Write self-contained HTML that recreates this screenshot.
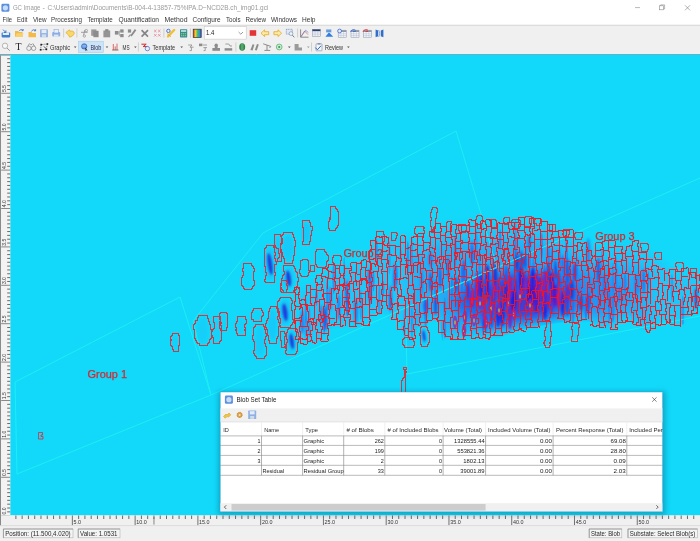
<!DOCTYPE html>
<html><head><meta charset="utf-8"><title>GC Image</title>
<style>
html,body{margin:0;padding:0;background:#f0f0f0;}
body{width:700px;height:541px;overflow:hidden;position:relative;font-family:"Liberation Sans",sans-serif;}
svg text{font-family:"Liberation Sans",sans-serif;}
#top{position:absolute;left:0;top:0;width:700px;height:55px;will-change:transform;}
#main{position:absolute;left:0;top:0;width:700px;height:541px;will-change:transform;}
</style></head><body>
<div id="main"><svg width="700" height="541" viewBox="0 0 700 541" style="position:absolute;left:0;top:0"><defs><filter id="b7" x="-20%" y="-50%" width="140%" height="200%"><feGaussianBlur stdDeviation="7"/></filter><filter id="b5" x="-20%" y="-50%" width="140%" height="200%"><feGaussianBlur stdDeviation="4.5"/></filter><filter id="b1" x="-5%" y="-20%" width="110%" height="140%"><feGaussianBlur stdDeviation="1.1"/></filter><filter id="b06" x="-5%" y="-20%" width="110%" height="140%"><feGaussianBlur stdDeviation="0.45"/></filter><clipPath id="pc"><rect x="10.2" y="55" width="690" height="460.6"/></clipPath></defs><rect x="10.20" y="55.00" width="690.00" height="460.60" fill="#12d9fa"/><defs><clipPath id="env"><polygon points="292,288.0 295,286.6 298,284.4 301,282.8 304,282.0 307,281.2 310,279.6 313,277.5 316,275.4 319,273.0 322,270.0 325,267.0 328,264.0 331,263.5 334,263.0 337,262.5 340,262.0 343,258.4 346,256.0 349,256.0 352,256.0 355,256.0 358,256.0 361,256.0 364,256.0 367,256.0 370,244.0 373,236.0 376,233.0 379,231.0 382,231.2 385,231.3 388,231.5 391,231.6 394,231.7 397,231.9 400,232.0 403,231.7 406,231.4 409,231.1 412,230.8 415,230.5 418,230.2 421,229.9 424,229.6 427,229.3 430,229.0 433,220.0 436,219.8 439,219.5 442,219.3 445,219.0 448,218.8 451,218.5 454,218.3 457,218.1 460,217.8 463,217.6 466,217.3 469,217.1 472,217.0 475,216.9 478,216.8 481,216.8 484,216.7 487,216.7 490,216.6 493,216.5 496,216.5 499,216.4 502,216.4 505,216.3 508,216.2 511,216.2 514,216.1 517,216.1 520,216.0 523,216.2 526,216.5 529,216.7 532,217.0 535,217.2 538,217.4 541,217.7 544,217.9 547,218.9 550,220.3 553,221.7 556,223.1 559,224.5 562,225.7 565,226.8 568,227.8 571,228.8 574,229.9 577,230.9 580,232.0 583,233.5 586,235.0 589,236.5 592,238.0 595,239.0 598,239.0 601,239.0 604,239.0 607,239.0 610,239.0 613,239.0 616,239.0 619,239.0 622,239.0 625,239.0 628,239.0 631,239.0 634,239.0 637,240.4 640,241.7 643,243.1 646,244.6 649,246.4 652,248.2 655,250.0 658,251.8 661,253.9 664,256.7 667,259.4 670,262.2 673,264.2 676,264.7 679,265.2 682,265.8 685,266.3 688,266.9 691,267.4 694,267.9 697,268.5 700,269.0 703,269.0 706,269.0 706,306.5 703,306.5 700,306.5 697,309.5 694,312.5 691,315.9 688,320.2 685,324.5 682,324.4 679,324.3 676,324.1 673,324.0 670,323.9 667,323.8 664,323.7 661,323.5 658,324.9 655,327.0 652,329.1 649,330.5 646,330.5 643,330.5 640,330.5 637,327.1 634,323.8 631,321.5 628,321.5 625,321.5 622,321.5 619,322.6 616,326.0 613,329.4 610,330.5 607,330.5 604,329.9 601,328.1 598,326.3 595,324.5 592,322.7 589,321.5 586,321.6 583,321.7 580,321.8 577,321.9 574,322.0 571,322.1 568,322.2 565,322.3 562,322.4 559,322.7 556,323.2 553,323.7 550,324.3 547,324.8 544,325.3 541,325.9 538,326.4 535,326.9 532,327.5 529,328.0 526,328.5 523,329.1 520,329.6 517,330.1 514,331.0 511,332.6 508,334.2 505,335.8 502,337.4 499,338.5 496,338.6 493,338.7 490,338.8 487,338.9 484,339.1 481,339.2 478,339.3 475,339.4 472,339.5 469,339.6 466,339.7 463,339.8 460,339.9 457,340.0 454,340.1 451,340.2 448,340.3 445,340.4 442,340.5 439,321.5 436,321.5 433,321.5 430,321.5 427,326.6 424,326.9 421,327.1 418,327.4 415,338.5 412,338.5 409,338.5 406,338.5 403,338.5 400,319.5 397,319.5 394,319.5 391,319.5 388,319.5 385,314.5 382,314.5 379,314.5 376,314.5 373,314.5 370,326.5 367,326.6 364,326.7 361,326.9 358,327.0 355,327.1 352,327.2 349,327.3 346,327.5 343,327.7 340,328.1 337,328.4 334,328.7 331,329.1 328,329.4 325,342.5 322,342.6 319,342.7 316,342.9 313,343.0 310,343.1 307,343.2 304,343.3 301,343.5 298,343.2 295,342.8 292,342.5"/></clipPath></defs><g clip-path="url(#pc)"><g clip-path="url(#env)"><polygon points="300,291 306,290 312,286 318,282 324,276 330,272 336,271 342,268 348,264 354,264 360,264 366,264 372,245 378,239 384,239 390,240 396,240 402,240 408,239 414,239 420,238 426,237 432,231 438,228 444,227 450,227 456,226 462,226 468,225 474,225 480,225 486,225 492,225 498,224 504,224 510,224 516,224 522,224 528,225 534,225 540,226 546,226 552,229 558,232 564,234 570,236 576,239 582,241 588,244 594,247 600,247 606,247 612,247 618,247 624,247 630,247 636,248 642,251 648,254 654,257 660,261 666,266 672,272 678,273 684,274 690,275 696,276 702,277 702,303 696,307 690,314 684,321 678,321 672,320 666,320 660,320 654,324 648,327 642,327 636,322 630,318 624,318 618,320 612,327 606,327 600,324 594,320 588,318 582,318 576,318 570,319 564,319 558,319 552,320 546,321 540,323 534,324 528,325 522,326 516,327 510,330 504,333 498,335 492,335 486,335 480,336 474,336 468,336 462,336 456,337 450,337 444,337 438,318 432,318 426,323 420,324 414,335 408,335 402,335 396,316 390,316 384,311 378,311 372,311 366,323 360,323 354,324 348,324 342,324 336,325 330,326 324,339 318,339 312,340 306,340 300,340" fill="#30b2f4" opacity="0.5" filter="url(#b5)"/><polygon points="410,255 416,254 422,254 428,253 434,244 440,243 446,243 452,242 458,242 464,241 470,241 476,241 482,241 488,241 494,241 500,240 506,240 512,240 518,240 524,240 530,241 536,241 542,242 548,243 554,246 560,249 566,251 572,253 578,255 584,258 590,261 596,263 602,263 608,263 614,263 620,263 626,263 632,263 638,265 644,268 650,271 650,323 644,323 638,321 632,314 626,314 620,314 614,321 608,323 602,321 596,318 590,314 584,314 578,314 572,315 566,315 560,315 554,316 548,317 542,318 536,319 530,320 524,321 518,322 512,325 506,328 500,331 494,331 488,331 482,332 476,332 470,332 464,332 458,332 452,333 446,333 440,314 434,314 428,319 422,320 416,326 410,331" fill="#2a90f0" opacity="0.4" filter="url(#b5)"/><ellipse cx="516" cy="298" rx="64" ry="25" fill="#2840e0" opacity="0.7" filter="url(#b7)" transform="rotate(-5 516 298)"/><ellipse cx="578" cy="294" rx="52" ry="22" fill="#2a70ec" opacity="0.45" filter="url(#b7)"/><ellipse cx="524" cy="296" rx="36" ry="20" fill="#5c26c4" opacity="0.65" filter="url(#b5)"/><g filter="url(#b06)"><ellipse cx="305.9" cy="311.6" rx="1.2" ry="12.4" fill="#2870ea" opacity="0.53"/><ellipse cx="309.6" cy="322.4" rx="1.0" ry="15.2" fill="#2870ea" opacity="0.39"/><ellipse cx="316.4" cy="297.9" rx="1.4" ry="8.0" fill="#2870ea" opacity="0.49"/><ellipse cx="324.2" cy="320.3" rx="1.5" ry="12.5" fill="#2870ea" opacity="0.44"/><ellipse cx="324.2" cy="321.9" rx="1.0" ry="13.3" fill="#2870ea" opacity="0.32"/><ellipse cx="327.1" cy="294.9" rx="1.0" ry="16.2" fill="#2870ea" opacity="0.54"/><ellipse cx="333.7" cy="277.3" rx="1.3" ry="16.9" fill="#2870ea" opacity="0.56"/><ellipse cx="344.2" cy="270.8" rx="0.9" ry="16.3" fill="#2870ea" opacity="0.39"/><ellipse cx="347.4" cy="308.1" rx="1.4" ry="8.1" fill="#2870ea" opacity="0.56"/><ellipse cx="347.4" cy="303.1" rx="1.4" ry="13.6" fill="#2870ea" opacity="0.53"/><ellipse cx="360.9" cy="304.8" rx="1.3" ry="15.2" fill="#2870ea" opacity="0.38"/><ellipse cx="369.8" cy="292.7" rx="1.3" ry="14.9" fill="#2870ea" opacity="0.52"/><ellipse cx="373.4" cy="281.0" rx="1.1" ry="10.5" fill="#2870ea" opacity="0.53"/><ellipse cx="376.7" cy="250.2" rx="0.9" ry="12.5" fill="#2870ea" opacity="0.59"/><ellipse cx="379.3" cy="302.9" rx="1.2" ry="17.4" fill="#2870ea" opacity="0.41"/><ellipse cx="383.2" cy="288.9" rx="1.2" ry="8.2" fill="#2870ea" opacity="0.51"/><ellipse cx="389.4" cy="258.0" rx="1.3" ry="16.4" fill="#2870ea" opacity="0.35"/><ellipse cx="396.7" cy="274.8" rx="1.1" ry="9.6" fill="#2870ea" opacity="0.37"/><ellipse cx="400.6" cy="257.1" rx="1.1" ry="10.1" fill="#2870ea" opacity="0.37"/><ellipse cx="404.7" cy="320.0" rx="1.1" ry="12.3" fill="#2870ea" opacity="0.37"/><ellipse cx="404.7" cy="328.0" rx="1.3" ry="8.7" fill="#2870ea" opacity="0.48"/><ellipse cx="407.8" cy="257.9" rx="1.1" ry="16.9" fill="#2870ea" opacity="0.57"/><ellipse cx="411.9" cy="324.0" rx="0.9" ry="16.3" fill="#2870ea" opacity="0.44"/><ellipse cx="411.9" cy="255.3" rx="1.1" ry="17.6" fill="#2870ea" opacity="0.36"/><ellipse cx="425.6" cy="314.7" rx="0.9" ry="11.4" fill="#2870ea" opacity="0.40"/><ellipse cx="425.6" cy="319.9" rx="1.5" ry="10.2" fill="#2870ea" opacity="0.30"/><ellipse cx="432.1" cy="292.4" rx="1.0" ry="11.1" fill="#2870ea" opacity="0.39"/><ellipse cx="435.3" cy="291.6" rx="1.1" ry="12.9" fill="#2870ea" opacity="0.59"/><ellipse cx="442.1" cy="331.1" rx="1.0" ry="10.8" fill="#2870ea" opacity="0.33"/><ellipse cx="444.8" cy="327.8" rx="1.4" ry="10.5" fill="#2870ea" opacity="0.57"/><ellipse cx="444.8" cy="308.7" rx="1.4" ry="11.3" fill="#2870ea" opacity="0.41"/><ellipse cx="451.8" cy="289.3" rx="1.0" ry="14.1" fill="#2870ea" opacity="0.60"/><ellipse cx="455.2" cy="251.3" rx="1.3" ry="16.2" fill="#2870ea" opacity="0.55"/><ellipse cx="458.9" cy="320.8" rx="1.1" ry="11.6" fill="#2870ea" opacity="0.30"/><ellipse cx="461.9" cy="279.0" rx="1.1" ry="13.7" fill="#2870ea" opacity="0.53"/><ellipse cx="465.3" cy="322.8" rx="1.3" ry="10.7" fill="#2870ea" opacity="0.33"/><ellipse cx="472.1" cy="298.5" rx="1.2" ry="14.0" fill="#2870ea" opacity="0.47"/><ellipse cx="476.2" cy="244.6" rx="1.4" ry="15.7" fill="#2870ea" opacity="0.39"/><ellipse cx="479.5" cy="315.5" rx="1.2" ry="8.4" fill="#2870ea" opacity="0.56"/><ellipse cx="479.5" cy="263.6" rx="1.1" ry="16.2" fill="#2870ea" opacity="0.47"/><ellipse cx="483.2" cy="320.5" rx="1.3" ry="16.8" fill="#2870ea" opacity="0.49"/><ellipse cx="486.6" cy="323.8" rx="1.4" ry="9.3" fill="#2870ea" opacity="0.39"/><ellipse cx="486.6" cy="292.9" rx="1.4" ry="13.0" fill="#2870ea" opacity="0.52"/><ellipse cx="489.4" cy="319.4" rx="1.2" ry="13.0" fill="#2870ea" opacity="0.35"/><ellipse cx="492.8" cy="259.6" rx="0.9" ry="9.6" fill="#2870ea" opacity="0.44"/><ellipse cx="496.8" cy="297.1" rx="1.4" ry="17.0" fill="#2870ea" opacity="0.39"/><ellipse cx="500.2" cy="239.6" rx="1.1" ry="10.4" fill="#2870ea" opacity="0.58"/><ellipse cx="502.9" cy="308.9" rx="1.4" ry="11.8" fill="#2870ea" opacity="0.34"/><ellipse cx="505.6" cy="303.7" rx="1.3" ry="13.6" fill="#2870ea" opacity="0.49"/><ellipse cx="508.7" cy="294.0" rx="1.4" ry="16.0" fill="#2870ea" opacity="0.41"/><ellipse cx="512.8" cy="291.7" rx="1.3" ry="14.7" fill="#2870ea" opacity="0.41"/><ellipse cx="515.5" cy="248.0" rx="1.4" ry="12.8" fill="#2870ea" opacity="0.34"/><ellipse cx="515.5" cy="237.6" rx="1.2" ry="18.0" fill="#2870ea" opacity="0.36"/><ellipse cx="518.4" cy="271.2" rx="1.4" ry="15.9" fill="#2870ea" opacity="0.60"/><ellipse cx="518.4" cy="284.8" rx="1.0" ry="11.6" fill="#2870ea" opacity="0.40"/><ellipse cx="526.1" cy="263.2" rx="1.2" ry="16.6" fill="#2870ea" opacity="0.33"/><ellipse cx="526.1" cy="291.5" rx="1.4" ry="8.9" fill="#2870ea" opacity="0.45"/><ellipse cx="529.7" cy="298.6" rx="1.3" ry="14.1" fill="#2870ea" opacity="0.33"/><ellipse cx="529.7" cy="259.4" rx="1.0" ry="12.5" fill="#2870ea" opacity="0.50"/><ellipse cx="533.5" cy="267.8" rx="1.2" ry="11.9" fill="#2870ea" opacity="0.47"/><ellipse cx="541.7" cy="245.9" rx="1.4" ry="12.8" fill="#2870ea" opacity="0.53"/><ellipse cx="544.5" cy="280.0" rx="1.2" ry="14.9" fill="#2870ea" opacity="0.59"/><ellipse cx="544.5" cy="289.0" rx="1.0" ry="13.0" fill="#2870ea" opacity="0.56"/><ellipse cx="548.3" cy="280.7" rx="1.2" ry="15.4" fill="#2870ea" opacity="0.44"/><ellipse cx="552.0" cy="256.6" rx="1.0" ry="8.3" fill="#2870ea" opacity="0.56"/><ellipse cx="552.0" cy="295.6" rx="1.0" ry="15.5" fill="#2870ea" opacity="0.44"/><ellipse cx="555.9" cy="279.8" rx="1.0" ry="14.3" fill="#2870ea" opacity="0.49"/><ellipse cx="555.9" cy="278.0" rx="1.3" ry="11.5" fill="#2870ea" opacity="0.40"/><ellipse cx="559.5" cy="261.8" rx="1.2" ry="15.5" fill="#2870ea" opacity="0.58"/><ellipse cx="559.5" cy="295.7" rx="1.4" ry="15.4" fill="#2870ea" opacity="0.42"/><ellipse cx="563.6" cy="283.3" rx="1.5" ry="15.3" fill="#2870ea" opacity="0.54"/><ellipse cx="566.5" cy="255.4" rx="1.5" ry="17.6" fill="#2870ea" opacity="0.53"/><ellipse cx="569.8" cy="271.3" rx="1.3" ry="9.0" fill="#2870ea" opacity="0.53"/><ellipse cx="572.9" cy="312.0" rx="1.4" ry="17.2" fill="#2870ea" opacity="0.51"/><ellipse cx="572.9" cy="295.5" rx="1.2" ry="16.4" fill="#2870ea" opacity="0.41"/><ellipse cx="576.9" cy="266.6" rx="1.2" ry="9.8" fill="#2870ea" opacity="0.38"/><ellipse cx="585.9" cy="308.1" rx="1.4" ry="11.9" fill="#2870ea" opacity="0.60"/><ellipse cx="589.3" cy="283.2" rx="1.1" ry="11.5" fill="#2870ea" opacity="0.31"/><ellipse cx="598.8" cy="297.8" rx="1.5" ry="16.9" fill="#2870ea" opacity="0.33"/><ellipse cx="602.2" cy="260.1" rx="1.4" ry="11.8" fill="#2870ea" opacity="0.32"/><ellipse cx="609.2" cy="307.4" rx="1.0" ry="15.1" fill="#2870ea" opacity="0.53"/><ellipse cx="609.2" cy="298.0" rx="1.2" ry="10.6" fill="#2870ea" opacity="0.33"/><ellipse cx="613.0" cy="278.9" rx="1.2" ry="16.1" fill="#2870ea" opacity="0.33"/><ellipse cx="613.0" cy="308.8" rx="1.5" ry="13.6" fill="#2870ea" opacity="0.50"/><ellipse cx="616.1" cy="274.6" rx="1.3" ry="17.8" fill="#2870ea" opacity="0.39"/><ellipse cx="619.4" cy="294.2" rx="1.0" ry="8.5" fill="#2870ea" opacity="0.52"/><ellipse cx="625.1" cy="283.3" rx="1.5" ry="9.7" fill="#2870ea" opacity="0.49"/><ellipse cx="638.8" cy="283.2" rx="1.4" ry="10.5" fill="#2870ea" opacity="0.31"/><ellipse cx="648.3" cy="280.5" rx="1.1" ry="9.3" fill="#2870ea" opacity="0.56"/><ellipse cx="671.9" cy="287.4" rx="1.4" ry="13.2" fill="#2870ea" opacity="0.35"/><ellipse cx="682.8" cy="311.7" rx="1.4" ry="16.1" fill="#2870ea" opacity="0.47"/></g><g filter="url(#b1)"><ellipse cx="302.3" cy="322.0" rx="1.9" ry="11.9" fill="#2a60ea" opacity="0.69"/><ellipse cx="306.4" cy="328.3" rx="1.3" ry="10.7" fill="#2a60ea" opacity="0.51"/><ellipse cx="321.2" cy="314.5" rx="1.4" ry="9.4" fill="#2448e0" opacity="0.59"/><ellipse cx="325.6" cy="318.1" rx="1.7" ry="12.6" fill="#2448e0" opacity="0.85"/><ellipse cx="330.0" cy="298.9" rx="1.7" ry="12.3" fill="#2a60ea" opacity="0.63"/><ellipse cx="338.8" cy="307.3" rx="1.3" ry="12.6" fill="#2a60ea" opacity="0.80"/><ellipse cx="346.8" cy="292.6" rx="1.7" ry="12.7" fill="#2448e0" opacity="0.71"/><ellipse cx="355.9" cy="311.1" rx="2.0" ry="12.5" fill="#2448e0" opacity="0.54"/><ellipse cx="369.7" cy="293.7" rx="1.5" ry="8.5" fill="#2a60ea" opacity="0.73"/><ellipse cx="369.7" cy="277.3" rx="2.1" ry="8.9" fill="#2a60ea" opacity="0.82"/><ellipse cx="390.4" cy="302.0" rx="1.4" ry="9.3" fill="#2448e0" opacity="0.83"/><ellipse cx="390.4" cy="293.8" rx="1.7" ry="9.0" fill="#2a60ea" opacity="0.53"/><ellipse cx="395.0" cy="271.4" rx="1.4" ry="7.8" fill="#2a60ea" opacity="0.86"/><ellipse cx="395.0" cy="280.1" rx="2.0" ry="9.6" fill="#2a60ea" opacity="0.78"/><ellipse cx="421.7" cy="281.8" rx="1.5" ry="12.5" fill="#2a60ea" opacity="0.53"/><ellipse cx="425.6" cy="305.7" rx="2.1" ry="7.3" fill="#2448e0" opacity="0.87"/><ellipse cx="425.6" cy="307.7" rx="1.4" ry="10.0" fill="#2a60ea" opacity="0.57"/><ellipse cx="430.5" cy="281.7" rx="1.8" ry="10.1" fill="#2448e0" opacity="0.71"/><ellipse cx="430.5" cy="259.3" rx="2.1" ry="7.7" fill="#2a60ea" opacity="0.59"/><ellipse cx="435.6" cy="306.1" rx="1.8" ry="8.9" fill="#2030d0" opacity="0.68"/><ellipse cx="440.1" cy="277.7" rx="1.4" ry="11.5" fill="#2448e0" opacity="0.74"/><ellipse cx="448.0" cy="267.3" rx="1.5" ry="11.0" fill="#2a60ea" opacity="0.72"/><ellipse cx="456.1" cy="284.5" rx="1.8" ry="7.4" fill="#2038dc" opacity="0.67"/><ellipse cx="464.0" cy="271.6" rx="1.9" ry="12.1" fill="#2a48e4" opacity="0.76"/><ellipse cx="468.1" cy="290.8" rx="1.6" ry="8.8" fill="#2a48e4" opacity="0.95"/><ellipse cx="468.1" cy="291.1" rx="1.4" ry="11.1" fill="#2038dc" opacity="0.71"/><ellipse cx="472.1" cy="252.4" rx="1.7" ry="11.6" fill="#2a60ea" opacity="0.72"/><ellipse cx="472.1" cy="298.2" rx="2.1" ry="9.4" fill="#8a1cb0" opacity="0.89"/><ellipse cx="472.1" cy="255.8" rx="1.7" ry="9.9" fill="#2a60ea" opacity="0.58"/><ellipse cx="477.2" cy="289.8" rx="2.2" ry="10.9" fill="#7020bc" opacity="0.83"/><ellipse cx="477.2" cy="284.1" rx="2.0" ry="11.6" fill="#4a18cc" opacity="0.85"/><ellipse cx="477.2" cy="284.3" rx="1.7" ry="10.1" fill="#a0209c" opacity="0.81"/><ellipse cx="481.1" cy="285.6" rx="1.7" ry="13.9" fill="#2418d8" opacity="0.88"/><ellipse cx="484.2" cy="319.6" rx="1.8" ry="11.1" fill="#2038dc" opacity="0.81"/><ellipse cx="484.2" cy="309.6" rx="1.7" ry="11.0" fill="#a0209c" opacity="0.95"/><ellipse cx="487.3" cy="290.5" rx="2.2" ry="9.0" fill="#4a18cc" opacity="0.88"/><ellipse cx="487.3" cy="273.0" rx="2.1" ry="8.6" fill="#2030d0" opacity="0.85"/><ellipse cx="487.3" cy="279.6" rx="1.9" ry="12.6" fill="#4a18cc" opacity="0.95"/><ellipse cx="491.6" cy="309.2" rx="1.6" ry="11.3" fill="#8a1cb0" opacity="0.94"/><ellipse cx="491.6" cy="319.1" rx="2.0" ry="9.8" fill="#2a48e4" opacity="0.70"/><ellipse cx="495.2" cy="287.8" rx="2.1" ry="10.6" fill="#8a1cb0" opacity="0.98"/><ellipse cx="495.2" cy="274.0" rx="2.0" ry="10.6" fill="#2030d0" opacity="0.90"/><ellipse cx="498.0" cy="316.7" rx="1.6" ry="10.9" fill="#2020dc" opacity="0.99"/><ellipse cx="502.2" cy="314.6" rx="2.2" ry="12.3" fill="#2020dc" opacity="0.83"/><ellipse cx="506.3" cy="295.3" rx="1.8" ry="11.0" fill="#2418d8" opacity="0.81"/><ellipse cx="506.3" cy="274.9" rx="1.9" ry="10.1" fill="#2a48e4" opacity="0.65"/><ellipse cx="510.0" cy="318.2" rx="2.1" ry="11.7" fill="#8a1cb0" opacity="0.83"/><ellipse cx="510.0" cy="286.5" rx="2.1" ry="11.1" fill="#a0209c" opacity="0.89"/><ellipse cx="513.4" cy="300.5" rx="2.2" ry="10.9" fill="#2418d8" opacity="0.98"/><ellipse cx="516.6" cy="263.1" rx="1.4" ry="12.4" fill="#2030d0" opacity="0.63"/><ellipse cx="516.6" cy="262.7" rx="1.8" ry="7.4" fill="#2030d0" opacity="0.80"/><ellipse cx="521.1" cy="278.0" rx="2.4" ry="11.7" fill="#2418d8" opacity="0.85"/><ellipse cx="521.1" cy="262.1" rx="1.7" ry="11.5" fill="#2030d0" opacity="0.76"/><ellipse cx="524.9" cy="284.7" rx="1.8" ry="10.7" fill="#8a1cb0" opacity="0.85"/><ellipse cx="524.9" cy="260.8" rx="1.9" ry="7.6" fill="#2038dc" opacity="0.70"/><ellipse cx="529.2" cy="289.0" rx="2.4" ry="9.5" fill="#7020bc" opacity="0.94"/><ellipse cx="529.2" cy="295.7" rx="2.0" ry="9.3" fill="#2418d8" opacity="0.99"/><ellipse cx="529.2" cy="242.5" rx="1.7" ry="7.2" fill="#2448e0" opacity="0.58"/><ellipse cx="532.8" cy="281.8" rx="2.1" ry="14.4" fill="#2020dc" opacity="0.99"/><ellipse cx="532.8" cy="295.0" rx="2.3" ry="9.9" fill="#4a18cc" opacity="0.82"/><ellipse cx="536.4" cy="297.8" rx="2.3" ry="14.7" fill="#4a18cc" opacity="0.92"/><ellipse cx="536.4" cy="284.8" rx="1.7" ry="11.7" fill="#7020bc" opacity="0.96"/><ellipse cx="540.2" cy="289.2" rx="1.8" ry="10.9" fill="#2020dc" opacity="0.98"/><ellipse cx="540.2" cy="290.0" rx="1.9" ry="9.9" fill="#a0209c" opacity="0.82"/><ellipse cx="545.0" cy="305.8" rx="2.0" ry="14.9" fill="#2020dc" opacity="0.89"/><ellipse cx="545.0" cy="296.6" rx="2.1" ry="10.8" fill="#7020bc" opacity="0.90"/><ellipse cx="545.0" cy="281.3" rx="2.2" ry="10.7" fill="#8a1cb0" opacity="0.96"/><ellipse cx="548.6" cy="256.3" rx="1.4" ry="9.1" fill="#2a60ea" opacity="0.60"/><ellipse cx="548.6" cy="273.7" rx="2.0" ry="12.2" fill="#2038dc" opacity="0.78"/><ellipse cx="551.9" cy="281.1" rx="1.8" ry="9.8" fill="#a0209c" opacity="0.85"/><ellipse cx="551.9" cy="286.8" rx="1.8" ry="14.4" fill="#2418d8" opacity="0.89"/><ellipse cx="551.9" cy="297.0" rx="1.6" ry="14.9" fill="#7020bc" opacity="0.83"/><ellipse cx="555.4" cy="269.5" rx="1.8" ry="9.8" fill="#2038dc" opacity="0.64"/><ellipse cx="555.4" cy="295.3" rx="2.0" ry="11.3" fill="#4a18cc" opacity="0.97"/><ellipse cx="558.5" cy="281.5" rx="1.6" ry="9.5" fill="#2a48e4" opacity="0.87"/><ellipse cx="558.5" cy="297.9" rx="2.2" ry="10.9" fill="#a0209c" opacity="0.98"/><ellipse cx="562.7" cy="264.1" rx="1.5" ry="9.2" fill="#2a60ea" opacity="0.83"/><ellipse cx="562.7" cy="303.6" rx="1.8" ry="12.9" fill="#2020dc" opacity="0.97"/><ellipse cx="567.4" cy="308.7" rx="1.7" ry="7.9" fill="#2038dc" opacity="0.70"/><ellipse cx="567.4" cy="271.5" rx="1.7" ry="12.9" fill="#2038dc" opacity="0.63"/><ellipse cx="567.4" cy="294.3" rx="2.1" ry="10.9" fill="#7020bc" opacity="0.85"/><ellipse cx="571.7" cy="290.2" rx="2.0" ry="9.8" fill="#2030d0" opacity="0.81"/><ellipse cx="574.6" cy="271.9" rx="1.8" ry="9.4" fill="#2a48e4" opacity="0.91"/><ellipse cx="581.1" cy="303.3" rx="2.0" ry="7.8" fill="#2030d0" opacity="0.64"/><ellipse cx="588.3" cy="303.1" rx="1.6" ry="10.3" fill="#2a48e4" opacity="0.92"/><ellipse cx="588.3" cy="250.7" rx="2.0" ry="12.4" fill="#2a60ea" opacity="0.60"/><ellipse cx="598.4" cy="269.8" rx="1.8" ry="12.3" fill="#2448e0" opacity="0.79"/><ellipse cx="604.4" cy="284.7" rx="2.1" ry="11.2" fill="#2a60ea" opacity="0.51"/><ellipse cx="636.0" cy="285.0" rx="1.5" ry="11.6" fill="#2a60ea" opacity="0.65"/><ellipse cx="643.7" cy="280.9" rx="1.4" ry="12.3" fill="#2448e0" opacity="0.64"/><ellipse cx="696.0" cy="298.5" rx="1.7" ry="10.9" fill="#2448e0" opacity="0.79"/></g><g filter="url(#b06)"><ellipse cx="472" cy="301" rx="2.2" ry="6.5" fill="#9820b0" opacity="0.75"/><ellipse cx="472" cy="301.5" rx="1.0" ry="2.3" fill="#a8cc44" opacity="0.7"/><ellipse cx="480" cy="303" rx="2.2" ry="6.5" fill="#9820b0" opacity="0.75"/><ellipse cx="480" cy="303.5" rx="1.0" ry="2.3" fill="#a8cc44" opacity="0.7"/><ellipse cx="465" cy="317" rx="2.2" ry="6.5" fill="#9820b0" opacity="0.75"/><ellipse cx="465" cy="317.5" rx="1.0" ry="2.3" fill="#a8cc44" opacity="0.7"/><ellipse cx="474" cy="320" rx="2.2" ry="6.5" fill="#9820b0" opacity="0.75"/><ellipse cx="474" cy="320.5" rx="1.0" ry="2.3" fill="#a8cc44" opacity="0.7"/><ellipse cx="491" cy="308" rx="2.2" ry="6.5" fill="#9820b0" opacity="0.75"/><ellipse cx="491" cy="308.5" rx="1.0" ry="2.3" fill="#a8cc44" opacity="0.7"/><ellipse cx="499" cy="310" rx="2.2" ry="6.5" fill="#9820b0" opacity="0.75"/><ellipse cx="499" cy="310.5" rx="1.0" ry="2.3" fill="#a8cc44" opacity="0.7"/><ellipse cx="464" cy="331" rx="2.2" ry="6.5" fill="#9820b0" opacity="0.75"/><ellipse cx="464" cy="331.5" rx="1.0" ry="2.3" fill="#a8cc44" opacity="0.7"/><ellipse cx="520" cy="296" rx="2.2" ry="6.5" fill="#9820b0" opacity="0.75"/><ellipse cx="520" cy="296.5" rx="1.0" ry="2.3" fill="#a8cc44" opacity="0.7"/><ellipse cx="508" cy="303" rx="2.2" ry="6.5" fill="#9820b0" opacity="0.75"/><ellipse cx="508" cy="303.5" rx="1.0" ry="2.3" fill="#a8cc44" opacity="0.7"/><ellipse cx="486" cy="322" rx="2.2" ry="6.5" fill="#9820b0" opacity="0.75"/><ellipse cx="486" cy="322.5" rx="1.0" ry="2.3" fill="#a8cc44" opacity="0.7"/><ellipse cx="455" cy="322" rx="2.2" ry="6.5" fill="#9820b0" opacity="0.75"/><ellipse cx="455" cy="322.5" rx="1.0" ry="2.3" fill="#a8cc44" opacity="0.7"/><ellipse cx="530" cy="305" rx="2.2" ry="6.5" fill="#9820b0" opacity="0.75"/><ellipse cx="530" cy="305.5" rx="1.0" ry="2.3" fill="#a8cc44" opacity="0.7"/><ellipse cx="514" cy="314" rx="2.2" ry="6.5" fill="#9820b0" opacity="0.75"/><ellipse cx="514" cy="314.5" rx="1.0" ry="2.3" fill="#a8cc44" opacity="0.7"/></g></g><g filter="url(#b1)"><ellipse cx="306.1" cy="232.4" rx="4.3" ry="10.0" fill="#2a96f2" opacity="0.24"/><ellipse cx="277.9" cy="247.8" rx="3.4" ry="11.1" fill="#2a96f2" opacity="0.17"/><ellipse cx="288.0" cy="247.8" rx="5.5" ry="12.7" fill="#2a96f2" opacity="0.21"/><ellipse cx="270.0" cy="264.1" rx="5.9" ry="15.5" fill="#2a96f2" opacity="0.28"/><ellipse cx="270.0" cy="264.1" rx="2.4" ry="11.1" fill="#1c30d8" opacity="0.9" transform="rotate(-8 270.0 264.1)"/><ellipse cx="247.1" cy="276.6" rx="4.7" ry="10.9" fill="#2a96f2" opacity="0.07"/><ellipse cx="321.0" cy="258.6" rx="5.0" ry="7.6" fill="#2a96f2" opacity="0.10"/><ellipse cx="304.9" cy="268.0" rx="3.2" ry="7.3" fill="#2a96f2" opacity="0.07"/><ellipse cx="288.6" cy="278.5" rx="6.0" ry="11.3" fill="#2a96f2" opacity="0.28"/><ellipse cx="288.6" cy="278.5" rx="2.4" ry="8.1" fill="#1c30d8" opacity="0.9" transform="rotate(-8 288.6 278.5)"/><ellipse cx="202.7" cy="330.5" rx="5.3" ry="12.5" fill="#2a96f2" opacity="0.14"/><ellipse cx="217.0" cy="329.6" rx="3.9" ry="11.4" fill="#2a96f2" opacity="0.10"/><ellipse cx="223.5" cy="321.0" rx="3.8" ry="7.6" fill="#2a96f2" opacity="0.07"/><ellipse cx="241.2" cy="326.0" rx="4.6" ry="7.6" fill="#2a96f2" opacity="0.10"/><ellipse cx="257.0" cy="315.1" rx="4.8" ry="5.2" fill="#2a96f2" opacity="0.07"/><ellipse cx="259.8" cy="341.4" rx="5.2" ry="13.9" fill="#2a96f2" opacity="0.17"/><ellipse cx="272.6" cy="324.8" rx="4.2" ry="15.3" fill="#2a96f2" opacity="0.24"/><ellipse cx="285.0" cy="312.2" rx="6.2" ry="12.4" fill="#2a96f2" opacity="0.32"/><ellipse cx="285.0" cy="312.2" rx="2.5" ry="8.9" fill="#1c30d8" opacity="0.9" transform="rotate(-8 285.0 312.2)"/><ellipse cx="282.8" cy="339.7" rx="2.4" ry="6.7" fill="#2a96f2" opacity="0.10"/><ellipse cx="291.8" cy="341.3" rx="5.2" ry="11.2" fill="#2a96f2" opacity="0.24"/><ellipse cx="291.8" cy="341.3" rx="2.1" ry="8.0" fill="#1c30d8" opacity="0.9" transform="rotate(-8 291.8 341.3)"/><ellipse cx="283.9" cy="286.6" rx="2.4" ry="5.3" fill="#2a96f2" opacity="0.07"/><ellipse cx="175.0" cy="342.2" rx="2.9" ry="7.3" fill="#2a96f2" opacity="0.14"/><ellipse cx="404.0" cy="379.5" rx="2.1" ry="10.5" fill="#2a96f2" opacity="0.07"/><ellipse cx="547.5" cy="334.0" rx="2.9" ry="10.9" fill="#2a96f2" opacity="0.14"/><ellipse cx="575.0" cy="331.5" rx="3.4" ry="8.0" fill="#2a96f2" opacity="0.14"/><ellipse cx="424.0" cy="336.0" rx="3.4" ry="8.4" fill="#2a96f2" opacity="0.28"/><ellipse cx="424.0" cy="336.0" rx="1.4" ry="6.0" fill="#1c30d8" opacity="0.9" transform="rotate(-8 424.0 336.0)"/><ellipse cx="408.5" cy="342.0" rx="4.6" ry="4.2" fill="#2a96f2" opacity="0.21"/></g><g fill="none" stroke="#1ef0f2" stroke-width="1" opacity="0.9"><polygon points="15,382 180,297 211,395 17,474"/><polygon points="193,321 263,233 456,131 497,267 211,395"/><polygon points="405.5,308 700,178 720,300 700,316 407,374"/></g><path d="M294.9 287.4V292.6H295.7V295.7H295.9V298.2H295.1V301.6H294.4V305.9H295.1V306.8M294.9 287.4H298.7V288.1H299.6M294.9 294.8H298.4V294.7H299.6M299.6 287.4V292.4H298.9V298.2H299.1V303.1H300.0V308.8H299.9V310.4M299.6 300.6H301.7V299.9H304.2V300.7H306.0M306.0 285.8V291.4H306.5V295.6H305.7V298.8H305.6V302.6H305.7V305.7H306.0V308.6H306.8V310.4M306.0 285.8H308.3V285.5H310.7M306.0 292.7H309.2V292.4H310.7M310.7 285.8V290.0H310.4V295.4H310.2V298.6H310.4V303.9H311.4V306.3M310.7 289.7H313.6V289.9H316.2M310.7 297.2H314.4V297.4H316.2M316.2 275.2V278.2H315.4V282.6H317.1V285.2H316.5V287.8H316.3V290.8H316.5V294.5H316.5V297.9H315.4V301.1H315.8V302.4M316.2 275.2H318.7V275.3H321.8V275.7H322.4M316.2 284.4H320.0V284.8H322.4M316.2 290.6H319.4V290.1H322.4M322.4 268.8V273.7H321.9V278.3H322.0V281.7H321.9V284.3H322.7V287.0H321.7V289.8H323.0V294.2H322.3V297.3M322.4 268.8H326.4V269.0H328.2M322.4 276.6H325.6V277.2H328.2M328.2 264.7V267.4H327.3V270.0H328.4V272.9H328.4V277.8H327.3V283.3H327.7V287.8H327.9V288.8M328.2 264.7H331.2V264.0H334.3V264.4H335.3M328.2 271.7H331.1V272.0H335.3M328.2 278.9H332.4V279.0H334.7V278.3H335.3M335.3 264.7V268.3H335.0V271.6H335.6V277.4H334.5V281.2H335.1V284.0H335.5V289.9H334.9V291.3M335.3 268.0H339.6V267.6H339.7M335.3 278.5H339.0V278.1H339.7M335.3 285.1H339.6V285.5H339.7M339.7 265.8V268.7H339.5V273.2H340.5V277.0H339.1V280.5H339.2V283.5H339.4V286.9H339.7V291.3M339.7 265.8H344.1V265.3H344.5M339.7 275.9H342.1V275.9H344.5M339.7 284.1H342.5V284.5H344.5M344.5 265.8V270.1H344.9V273.1H343.8V278.2H344.2V283.7H343.9V287.0H345.2V290.0M344.5 268.5H346.7V268.1H350.5M350.5 262.8V266.4H351.3V270.8H349.9V273.8H350.2V276.8H351.1V281.2H349.6V286.2M350.5 262.8H354.0V262.8H356.4V262.8H356.5M350.5 272.3H353.7V272.5H356.5M356.5 262.8V267.4H356.5V273.0H355.9V275.9H355.8V280.2H356.0V284.3H356.8V286.2M356.5 263.3H360.1V262.6H361.2M356.5 274.8H360.8V274.9H361.2M361.2 260.1V262.8H361.6V266.1H361.9V269.3H360.7V272.3H360.8V276.9H360.7V279.6H361.3V284.7H360.4V284.8M361.2 260.1H363.3V259.4H366.2M361.2 267.9H365.3V267.3H366.2M361.2 278.3H364.2V278.3H366.2M366.2 260.1V264.2H366.2V267.8H365.5V273.1H365.4V276.6H366.7V280.1H367.1V283.3H366.3V284.8M366.2 261.6H369.4V262.0H370.4M366.2 270.9H370.2V270.3H370.4M370.4 240.7V245.5H371.4V250.3H369.9V253.3H369.5V256.8H369.6V261.6H370.8V266.3H370.1V270.4H369.9V276.1H369.4V278.7M370.4 240.7H373.8V240.2H375.8M370.4 249.6H373.3V249.0H375.8M370.4 259.1H373.1V258.5H375.8M375.8 236.9V240.6H375.9V244.0H375.2V247.2H375.0V250.5H375.2V255.4H375.3V258.0H375.6V261.2H376.2V264.5H375.9V267.1M375.8 236.9H379.0V237.5H381.8V236.9H382.8M375.8 243.3H377.9V243.7H380.7V243.5H382.8M375.8 254.4H378.3V254.3H381.7V254.7H382.8M382.8 236.5V241.5H382.2V245.6H382.4V249.4H382.5V255.2H381.8V261.1H381.8V263.8H382.2V266.9M382.8 236.5H386.9V237.0H388.4M382.8 244.8H384.8V245.0H388.4M382.8 251.4H386.8V250.9H388.4M388.4 236.5V239.2H388.1V243.1H387.4V247.3H389.2V250.0H389.3V254.2H387.8V260.1H388.4V264.1H388.2V264.2M388.4 245.7H390.8V245.3H393.5V245.0H395.6M388.4 254.6H391.9V255.1H395.2V254.4H395.6M395.6 245.7V249.0H395.1V252.0H395.4V255.8H396.0V261.4H395.1V264.8M395.6 246.5H398.4V246.4H400.7M395.6 257.9H398.5V258.1H400.6M400.7 235.9V241.3H400.0V245.4H400.0V248.4H400.6V252.5H400.9V258.0H401.1V261.7H400.6V265.2M400.7 235.9H404.7V236.1H405.4M400.7 242.7H404.8V242.4H405.4M400.7 254.0H403.2V254.5H405.4M405.4 235.9V238.8H405.0V241.7H405.9V245.8H405.8V249.2H405.9V255.1H404.6V258.7H406.2V264.2H406.2V267.5H405.6V270.3H405.3V274.8H405.0V275.4M405.4 248.1H408.4V247.4H410.5V248.5H411.2M405.4 260.0H409.7V260.6H411.2M405.4 266.0H407.7V265.8H410.2V265.5H411.2M411.2 237.5V240.4H411.1V245.8H410.4V249.9H410.9V255.5H410.5V260.3H410.9V265.0H411.9V270.4H411.9V273.9H410.8V275.4M411.2 237.5H413.9V236.9H417.8M411.2 243.7H413.7V244.1H417.6V244.3H417.9M411.2 250.0H415.3V249.8H417.9M411.2 256.1H413.3V256.3H417.0V256.2H417.9M411.2 265.7H413.6V265.2H416.4V265.8H417.9M417.9 233.8V236.5H417.9V239.8H417.6V242.4H417.1V245.0H417.2V249.8H417.1V255.4H418.5V258.8H418.3V264.7H417.2V269.1H417.9V272.7H417.5V273.3M417.9 233.8H421.5V233.3H423.5M417.9 245.4H420.8V245.1H423.5M417.9 254.9H421.4V254.5H423.5M417.9 263.1H421.3V263.0H423.5M423.5 233.8V237.4H422.9V240.9H423.1V246.4H423.4V251.7H422.6V254.9H424.4V257.6H422.6V261.9H423.1V265.1H423.7V269.4M423.5 242.8H426.0V242.9H429.1V243.3H429.9M423.5 250.2H426.9V249.6H429.9M429.9 231.0V233.8H429.8V236.4H430.9V241.1H430.0V245.8H429.7V251.4H430.3V255.4H429.5V258.4H429.5V262.2H429.1V263.8M429.9 231.0H432.6V231.1H434.7V231.1H435.1M429.9 237.5H434.3V237.1H435.1M429.9 247.9H432.7V248.4H435.1M429.9 255.8H433.6V256.2H435.1M435.1 223.5V228.5H434.4V232.1H434.7V237.8H435.0V242.5H435.9V246.4H435.9V249.9H434.1V252.7H435.4V256.6H435.7V260.9H435.4V263.8M435.1 223.5H438.5V223.8H440.9M435.1 232.4H439.2V232.9H440.9M435.1 238.8H439.2V238.8H440.9M440.9 223.5V228.0H441.8V231.9H440.7V236.6H440.7V241.6H441.0V246.7H441.6V251.2H441.7V256.4H441.6V259.0H439.9V263.7H440.6V267.2M440.9 226.1H443.9V226.5H446.2M440.9 235.9H445.2V236.3H446.2M440.9 244.8H444.3V244.6H446.2M440.9 256.6H445.1V256.3H446.2M446.2 226.1V232.0H445.7V236.7H445.4V241.4H446.6V246.5H446.9V250.0H445.4V255.3H445.3V258.7H445.7V263.9H446.1V269.3H446.5V270.2M446.2 237.0H450.2V237.6H451.5M446.2 245.1H449.8V245.2H451.5M446.2 255.9H449.0V255.5H451.5M451.5 224.6V227.2H450.8V231.0H450.7V234.2H451.3V239.7H452.2V243.6H450.7V247.0H451.8V250.9H451.6V256.0H451.8V261.5H450.6V265.1H450.5V269.4H451.7V270.2M451.5 224.6H453.6V224.5H456.0V224.1H456.4M451.5 236.2H454.4V236.5H456.4M451.5 244.7H453.8V244.3H456.4M456.4 224.6V229.1H455.8V233.0H456.0V238.4H455.6V244.4H455.9V248.0H455.6V253.7H457.1V256.4H456.5V260.3M456.4 225.8H460.0V225.5H461.4M456.4 233.1H460.5V232.8H461.4M456.4 241.7H459.8V241.7H461.4M456.4 248.1H458.6V248.7H461.2V247.9H461.4M461.4 225.0V227.7H461.1V233.6H460.7V238.1H460.9V240.7H462.1V243.6H460.7V249.0H460.9V252.2H462.3V255.4H462.1V258.9H461.6V260.3M461.4 225.0H464.3V225.7H468.6V224.5H468.9M461.4 231.9H464.2V231.3H467.8V232.1H468.9M461.4 242.5H464.4V242.1H466.4V242.4H468.9M461.4 251.2H465.0V251.7H468.9M468.9 219.6V222.9H469.8V225.9H469.5V231.6H468.2V237.1H469.2V241.7H468.4V245.3H468.4V249.4H469.2V254.4H469.3V258.2M468.9 219.6H471.7V220.0H475.0M468.9 226.9H471.9V226.6H475.0M468.9 233.0H473.1V233.3H475.0M468.9 243.1H471.8V243.3H474.9M475.0 219.6V222.8H475.8V228.7H475.7V233.3H475.2V239.1H474.8V244.5H475.5V250.0H474.8V254.8H474.1V257.5H474.2V259.7M475.0 223.5H477.8V224.2H480.0V223.0H480.6M475.0 232.0H477.5V232.4H480.1V232.6H480.6M475.0 243.2H478.2V243.7H480.6M480.6 220.9V225.8H480.1V228.3H481.0V232.9H480.7V237.2H481.4V240.7H481.4V243.8H480.9V249.6H479.9V254.8H480.1V257.5H480.4V260.9M480.6 220.9H483.3V221.6H485.3V220.5H485.6M480.6 229.1H483.3V228.5H485.6M480.6 236.7H484.2V236.5H485.6M480.6 245.3H483.4V244.9H485.6M485.6 219.8V224.8H486.2V228.1H486.1V230.9H485.9V234.5H485.9V237.8H485.3V242.6H486.5V246.3H485.0V249.2H486.0V254.9H484.7V258.6H485.0V264.4H484.9V264.6M485.6 219.8H489.5V220.6H491.2M485.6 226.5H488.6V226.5H491.2M485.6 237.0H487.8V237.0H491.2M485.6 246.3H489.3V246.9H491.2M485.6 257.3H489.0V257.1H491.2M491.2 219.8V223.0H491.3V228.8H491.7V232.9H490.5V238.3H492.0V243.5H490.8V247.4H491.4V253.1H490.7V257.0H490.3V259.6H490.7V264.9H491.6V268.5M491.2 228.9H494.2V228.6H497.5M491.2 237.9H493.4V238.0H497.5M491.2 244.3H495.7V243.8H497.5M491.2 256.2H495.6V255.8H497.5M497.5 222.9V227.9H497.7V232.3H497.9V235.2H496.5V237.9H497.7V241.9H498.1V247.8H496.7V251.6H497.3V256.0H498.3V260.6H497.1V265.4H497.1V268.5M497.5 222.9H499.7V223.0H502.8M497.5 232.8H500.9V232.8H502.8M497.5 239.6H501.3V239.7H502.8M497.5 248.0H499.7V248.5H502.8M502.8 222.9V228.2H502.1V231.2H502.7V235.6H503.2V240.0H503.6V245.3H502.0V249.0H503.6V254.2H501.9V258.9H502.1V261.8M502.8 223.5H507.3V222.8H508.5M502.8 232.4H507.3V232.8H508.5M502.8 242.2H507.0V242.0H508.5M502.8 249.8H505.4V249.6H508.1V250.3H508.5M508.5 222.0V225.0H508.8V228.1H509.2V232.7H507.7V238.1H508.5V242.3H507.6V248.0H508.5V253.5H507.6V258.4H508.2V261.8M508.5 222.0H512.0V222.5H514.2M508.5 229.0H512.6V228.6H514.2M508.5 236.8H511.2V237.1H514.2M508.5 245.1H512.4V245.7H514.2M508.5 255.1H512.6V254.8H514.2M514.2 222.0V224.9H514.0V228.6H513.3V233.3H514.1V236.3H514.7V240.2H513.2V245.8H514.0V248.6H513.7V252.0H513.2V255.7H513.5V258.9H514.5V261.1M514.2 222.8H516.2V222.3H518.3M514.2 229.8H517.6V230.3H518.3M514.2 238.7H518.1V239.0H518.3M514.2 249.5H517.1V249.8H518.3M518.3 217.6V222.2H519.0V224.9H518.7V228.6H517.4V232.2H518.6V235.0H519.0V237.7H517.8V241.3H517.4V247.1H519.2V252.7H517.7V255.1M518.3 217.6H521.2V217.3H524.9M518.3 224.1H520.3V224.6H523.2V224.5H524.9M518.3 230.7H521.5V230.3H523.7V230.1H524.9M518.3 238.2H521.2V238.8H524.9M524.9 217.6V221.6H524.5V227.2H524.8V232.0H525.7V236.7H524.2V240.3H525.7V243.0H524.3V247.6H525.6V253.0H525.4V258.0H524.6V258.3M524.9 227.7H528.5V227.0H529.8M524.9 234.5H527.0V235.1H529.4V234.6H529.8M524.9 246.4H526.9V246.6H529.8M529.8 218.2V223.8H530.0V228.4H529.2V231.7H530.7V237.5H529.6V242.8H530.2V246.3H529.2V251.4H530.7V257.4H529.5V258.3M529.8 218.2H532.6V217.5H533.8M529.8 226.0H533.8M529.8 233.5H533.8M529.8 242.5H533.8M533.8 218.2V223.9H534.2V228.5H532.9V234.2H534.1V238.9H534.5V242.2H534.0V247.1H534.3V249.9H534.2V255.6H534.0V257.0M533.8 218.9H538.1V218.2H540.5M533.8 230.0H537.3V229.8H540.5M533.8 239.9H536.1V239.6H540.1V240.3H540.5M540.5 218.9V223.9H539.9V229.4H540.8V232.9H540.0V236.0H540.3V239.8H540.0V245.3H541.0V249.6H541.4V253.4M540.5 221.2H544.8V221.7H547.0M540.5 231.3H544.4V231.6H547.0M540.5 239.4H543.4V239.1H547.0M547.0 221.2V227.0H547.2V231.3H547.5V237.0H547.7V240.7H547.0V246.5H547.0V251.8H547.0V257.2H546.1V259.7H546.1V262.6M547.0 224.0H549.9V224.8H552.5M547.0 230.8H551.0V230.8H552.5M547.0 239.0H550.9V238.4H552.5M547.0 247.0H549.6V246.8H552.5M547.0 256.0H550.3V256.3H552.5M552.5 224.0V227.3H552.6V230.1H552.6V234.0H551.5V237.5H553.4V242.0H551.6V246.5H552.9V249.5H552.3V252.7H552.6V258.1H552.0V261.1H551.8V262.6M552.5 231.8H554.7V231.8H558.7V232.2H558.8M552.5 237.8H555.6V237.5H558.8M552.5 244.7H554.8V245.3H558.8M552.5 251.3H556.6V250.8H558.8M558.8 230.1V233.8H558.3V236.8H559.1V241.2H559.7V244.2H559.5V250.0H559.3V252.9H558.2V255.7H558.5V259.3M558.8 230.1H561.2V230.1H563.3V230.4H565.6V230.6H566.1M558.8 237.3H562.6V237.1H565.9V237.4H566.1M558.8 245.8H562.8V246.2H566.1M566.1 230.1V235.4H565.9V240.7H567.1V243.8H566.4V246.3H566.5V249.0H566.5V251.6H565.9V257.1H565.8V259.3M566.1 230.4H569.3V229.9H573.2M566.1 237.3H569.6V237.8H573.2M566.1 246.6H568.7V246.6H571.4V246.4H573.2M573.2 230.4V234.9H573.2V240.1H573.3V245.8H573.4V251.3H573.9V256.3H572.9V260.5H572.4V264.4M573.2 245.4H576.8V246.0H577.3M573.2 252.2H576.8V252.5H577.3M573.2 258.4H576.0V258.2H577.3M577.3 242.7V247.5H577.5V251.7H576.7V254.3H576.7V260.2H578.0V264.4M577.3 242.7H580.9V243.1H582.0M577.3 250.2H581.3V250.4H582.0M582.0 242.7V246.2H581.4V249.2H582.5V252.8H582.2V256.4H583.0V261.0H581.3V266.2H581.6V270.3H581.6V270.4M582.0 243.1H584.8V242.8H586.6M582.0 254.8H584.6V254.6H586.6M582.0 261.5H584.6V261.4H586.6M586.6 243.1V247.0H587.3V249.6H586.7V253.3H586.1V258.8H586.1V264.1H587.4V270.0H585.9V270.4M586.6 251.0H588.9V250.7H591.9M586.6 260.9H589.0V260.4H591.9M591.9 251.0V255.1H592.2V258.3H591.7V263.1H592.4V267.3M591.9 256.0H594.6V255.6H595.9M595.9 242.6V246.3H595.0V251.4H595.2V256.9H595.4V260.3H596.0V266.0H595.7V270.1M595.9 242.6H599.0V242.0H601.7V243.3H602.8M595.9 250.1H600.2V249.5H602.8M595.9 256.3H599.0V256.2H602.1V256.8H602.8M595.9 262.4H598.2V262.7H600.5V261.9H602.8M602.8 241.0V247.0H603.2V251.4H603.8V255.7H602.7V261.1H603.7V266.2H602.5V270.1M602.8 241.0H604.8V240.6H608.4M602.8 250.0H607.0V250.2H608.4M602.8 260.8H606.1V261.0H608.4M608.4 240.5V244.6H608.3V248.5H608.3V251.8H609.0V257.4H608.4V262.9H608.0V268.4H609.3V273.2H609.3V276.8M608.4 240.5H612.1V240.5H614.3V239.9H615.0M608.4 247.6H612.1V247.2H615.0M608.4 259.3H611.9V258.8H615.0M608.4 268.2H612.5V267.8H615.0M615.0 240.5V245.3H614.2V248.3H614.1V251.2H614.1V255.1H615.3V260.6H614.9V263.7H615.9V269.4H616.0V272.0H615.2V276.7H615.1V276.8M615.0 246.4H619.3V246.4H621.4V246.1H622.0M615.0 253.6H619.0V253.2H622.0M615.0 261.3H617.4V261.8H620.2V261.6H622.0M622.0 246.4V249.0H621.5V252.1H622.7V256.7H622.3V259.5H621.6V265.2H622.2V270.3H622.0V273.4M622.0 253.2H626.0M622.0 260.8H624.4V260.9H626.0M626.0 246.4V250.1H625.0V253.3H625.7V258.0H626.0V261.1H626.5V266.4H626.3V271.3H625.5V272.5M626.0 246.4H629.5V245.9H632.5M626.0 256.2H629.4V256.1H632.5M632.5 241.2V245.9H631.8V250.4H632.7V255.5H633.4V259.6H632.1V262.7H632.2V266.7H633.4V271.0H632.8V273.7M632.5 241.2H634.5V240.7H637.9V240.5H638.5M632.5 251.7H636.2V251.2H638.5M632.5 262.7H635.7V262.5H638.5M638.5 241.2V243.7H637.8V246.6H638.9V251.6H638.0V255.2H639.1V259.0H638.2V264.8H638.6V269.2H638.8V271.9H638.3V273.7M638.5 252.0H642.2V252.6H645.0V251.9H646.0M638.5 259.1H640.8V258.7H643.2V259.0H646.0M646.0 252.0V256.7H646.9V262.0H645.2V266.8H645.2V271.5H646.7V276.4H645.3V277.2M646.0 259.0H648.5V259.2H652.3V259.3H652.8M646.0 268.5H648.5V269.1H652.8M652.8 259.0V261.5H652.5V266.8H651.9V271.8H652.6V275.6H652.7V277.2M652.8 265.8H656.9V266.1H658.7M658.7 265.8V269.8H657.9V272.9H658.8V277.9H659.2V279.4M658.7 269.7H662.4V268.9H664.5M664.5 269.7V275.5H664.7V279.0H664.4V281.3M664.5 273.9H668.0V274.2H669.4M669.4 269.3V272.0H668.5V275.1H669.9V279.7H669.9V284.1H669.1V288.1M669.4 269.3H671.8V269.1H674.9V269.6H675.7M669.4 278.7H672.9V278.5H675.7M675.7 269.3V272.3H675.1V275.4H675.8V280.3H676.1V283.5H675.3V286.5H676.0V288.6M675.7 271.4H678.4V271.0H681.2M675.7 280.3H680.2V280.1H681.2M681.2 268.4V274.2H681.1V280.0H680.6V284.1H681.1V287.5H681.2V288.6M681.2 268.4H683.5V268.4H686.8V267.9H688.4M681.2 276.0H684.6V276.0H688.4M688.4 268.4V273.6H689.0V279.0H688.5V284.7H688.7V288.0M688.4 272.1H692.5V272.3H695.7M695.7 272.1V278.0H696.5V283.2H696.3V285.1M695.7 275.0H699.2V274.6H701.0M699.5 275.0V280.1H700.0V284.7H699.8V285.1M295.1 306.2V309.6H294.4V314.4H294.4V319.7H294.5V324.1M295.1 318.1H299.4V317.8H301.4M295.1 306.2H299.1V306.0H301.4M301.4 304.2V307.2H302.2V310.1H302.4V315.6H301.3V321.1H300.6V324.1M301.4 304.2H304.2V304.7H306.3V304.6H307.7M307.7 304.2V307.0H307.4V311.2H308.2V313.8H308.5V319.2H308.7V322.4H307.2V324.3M307.7 319.1H310.4V318.5H312.9V319.3H314.1M307.7 305.4H312.0V305.4H314.1M314.1 302.1V305.4H314.0V311.1H314.4V314.0H314.0V318.1H313.1V324.0H315.0V324.3M314.1 302.1H316.9V301.7H319.5M319.5 299.4V303.9H319.2V306.9H319.8V311.7H320.1V314.7H318.6V320.3H319.7V321.8M319.5 315.2H321.6V315.3H323.7M319.5 299.4H321.7V299.9H323.7M323.7 293.3V298.3H324.0V301.6H324.4V306.3H323.1V310.1H323.0V314.2H324.7V318.0H323.5V321.8M323.7 302.2H326.0V302.5H328.3V302.4H331.1M323.7 293.3H325.9V293.0H329.2V293.9H331.1M331.1 288.3V292.3H331.8V295.5H331.4V300.5H330.4V306.0H330.6V309.1M331.1 288.3H334.7V288.9H337.6M337.6 285.7V289.6H338.4V293.9H336.9V298.7H337.5V302.8M337.6 285.7H339.6V285.3H342.1V286.3H343.3M343.3 285.0V290.7H342.6V294.8H342.8V299.8H342.8V302.9H342.8V305.8H343.7V307.9M343.3 297.4H346.0V297.2H348.5M343.3 285.0H347.0V284.6H348.5M348.5 283.3V286.8H349.2V289.5H347.9V293.0H349.2V295.9H349.4V298.8H348.6V304.0H348.6V307.9M348.5 283.3H351.1V283.9H353.7M353.7 281.1V286.7H353.7V291.5H354.0V296.7H354.4V301.7H352.7V302.6M353.7 289.5H357.9V288.9H359.9M353.7 281.1H355.8V281.4H359.2V280.6H359.9M359.9 280.0V285.6H359.3V291.0H359.4V296.3H359.8V301.0H360.2V302.6M359.9 293.7H363.6V293.3H366.0M359.9 280.0H362.5V279.7H365.5V280.3H366.0M366.0 280.0V282.9H366.2V287.4H367.0V291.0H365.9V296.8H365.3V302.4H365.7V304.1M366.0 282.3H369.0V282.0H371.1M371.1 263.8V269.3H370.8V273.9H371.9V277.3H372.0V281.5H371.4V284.9H371.5V289.9H371.3V295.5H371.1V298.0H371.9V302.5H371.3V304.1M371.1 272.3H373.8V271.8H377.5M371.1 263.8H374.8V264.2H377.6M377.6 258.2V261.4H377.9V265.9H378.2V271.9H377.0V277.7H378.1V282.1H378.5V285.5M377.6 266.5H379.9V266.3H381.7M377.6 258.2H381.3V257.6H381.7M381.7 258.2V263.4H382.1V266.8H382.6V269.4H381.1V273.4H382.3V277.9H382.0V283.7H381.4V285.3M381.7 271.6H385.1V271.2H387.2V271.9H387.6M381.7 259.1H384.6V259.1H387.6M387.6 259.1V263.2H386.6V267.1H387.7V272.4H387.3V277.2H387.9V281.5H387.8V285.6H387.8V287.9M387.6 266.0H389.9V266.5H393.8V265.4H395.1M395.1 266.0V270.7H394.5V273.5H395.4V279.5H394.2V285.1H394.8V289.9H394.6V290.7M395.1 279.1H399.0V278.9H400.3M395.1 266.4H397.3V266.9H400.3M400.3 264.3V268.3H400.3V272.8H400.3V276.0H400.7V279.4H399.9V284.6H400.7V289.7H401.2V295.2H399.8V297.4M400.3 278.0H403.7V277.7H406.7V278.1H407.7M400.3 264.3H403.2V264.5H407.0V264.4H407.7M407.7 264.3V269.3H407.0V274.7H408.7V280.4H408.3V284.3H408.6V288.7H407.2V293.1H408.4V298.0H408.4V300.6H408.7V303.7M407.7 285.6H412.0V285.3H413.7M407.7 295.5H411.4V296.0H413.7M407.7 272.1H411.6V272.2H413.7M413.7 262.9V268.3H413.1V272.9H412.9V278.6H412.7V284.5H413.8V289.6H414.0V293.9H413.6V297.1H413.3V300.0H413.2V303.7M413.7 276.9H417.1V277.0H420.8M413.7 262.9H416.4V262.9H420.8M420.8 262.9V268.0H420.6V273.7H421.0V277.4H421.1V282.3H421.7V287.0H420.9V290.8H420.7V294.3H421.1V296.8M420.8 282.5H423.3V281.9H425.8M420.8 268.0H424.6V268.5H425.8M425.8 268.0V270.8H426.4V273.8H426.8V276.5H426.3V279.5H425.8V283.3H426.5V286.8H426.2V292.6H424.9V296.8M425.8 279.4H429.7V279.9H431.7M425.8 270.5H428.9V270.3H431.7M431.7 260.0V264.1H431.7V268.7H432.4V271.3H432.3V277.2H431.5V281.2H432.6V285.1H431.5V290.6H431.7V295.4H431.3V296.0M431.7 272.1H435.7V272.1H437.1M431.7 286.1H435.9V286.0H437.1M431.7 260.0H435.2V260.2H437.1M437.1 257.2V261.2H436.1V265.5H437.0V271.3H437.4V276.5H436.8V282.1H437.7V284.9H437.4V290.6H437.4V293.3M437.1 268.1H440.5V268.1H443.0M437.1 284.7H440.1V284.8H443.0M437.1 257.2H439.3V256.7H443.0M443.0 257.2V262.9H442.4V268.7H443.4V273.2H443.3V278.1H442.5V282.3H442.1V285.0H443.8V290.5H443.5V292.9M443.0 274.4H446.7V274.3H449.2M443.0 259.5H445.0V259.5H447.6V259.4H449.2M449.2 259.5V263.7H448.8V269.1H448.5V273.7H449.5V276.6H448.6V281.4H449.9V285.3H449.3V290.3H449.4V294.4H449.5V299.4H449.8V303.8H449.6V307.0H448.6V307.3M449.2 278.7H452.3V279.2H454.7M449.2 294.2H451.9V294.3H454.7M449.2 268.2H453.2V268.3H454.7M454.7 252.4V255.5H455.1V259.6H454.9V264.7H454.3V270.1H455.2V274.7H454.9V278.5H455.6V282.4H454.2V286.8H455.5V292.6H454.9V296.4H455.2V300.9H455.3V306.3H455.1V307.3M454.7 267.5H459.1V267.7H459.3M454.7 282.4H458.6V282.3H459.3M454.7 294.3H458.7V293.9H459.3M454.7 252.4H459.1V252.8H459.3M459.3 252.4V255.6H459.7V260.2H460.3V264.2H459.1V267.1H458.3V270.1H459.5V275.9H458.5V279.0H459.7V282.6H458.4V288.2H458.6V292.2H459.8V297.4H460.2V302.0H458.6V304.8H459.6V307.2M459.3 276.1H461.7V276.0H464.4V276.0H465.9M459.3 292.4H462.5V292.8H465.7V292.2H465.9M459.3 265.4H463.4V265.1H465.9M465.9 252.8V256.0H465.5V260.4H465.7V263.0H465.1V265.6H464.9V269.1H466.1V272.2H466.6V278.1H466.1V280.8H465.2V285.1H466.7V291.0H466.3V296.6H465.1V297.5M465.9 266.1H468.4V266.2H471.8V266.6H472.1M465.9 277.4H468.3V277.0H471.1V277.2H472.1M465.9 252.8H469.1V252.4H471.6V252.5H472.1M472.1 251.2V253.9H471.9V259.9H471.4V262.5H472.1V267.2H471.8V270.5H472.5V275.1H471.8V279.7H472.8V284.0H471.9V288.7H472.1V291.5H472.9V294.5H472.6V298.5H472.6V302.8H472.7V304.6M472.1 262.0H476.0V262.4H477.1M472.1 280.2H475.8V280.7H477.1M472.1 298.6H476.0V299.1H477.1M472.1 251.2H476.3V251.4H477.1M477.1 251.2V255.7H476.5V259.8H477.5V262.6H476.6V268.2H476.2V271.1H477.8V276.0H477.1V281.5H476.6V284.0H477.8V288.7H476.8V293.2H476.3V296.8H477.3V302.3H476.8V304.6M477.1 264.3H479.9V264.5H482.1M477.1 280.0H481.3V280.2H482.1M477.1 255.4H480.8V255.7H482.1M482.1 255.2V259.2H482.3V262.4H482.2V265.0H482.3V270.8H482.5V275.7H482.3V279.3H482.7V283.1H481.8V287.6H483.1V292.6H482.5V295.6H482.8V299.6H482.4V304.0H482.7V304.3M482.1 264.3H484.8V264.0H486.8M482.1 273.6H484.4V273.6H486.5V274.0H486.8M482.1 284.9H485.6V285.5H486.8M482.1 295.4H485.1V295.8H486.8M482.1 255.2H484.2V255.0H486.8M486.8 255.2V261.0H485.9V263.6H485.8V269.0H486.8V273.9H487.1V279.3H486.8V282.9H486.0V286.8H486.2V292.6H487.3V296.1H486.8V300.2H487.0V304.3M486.8 270.5H490.3V270.5H493.4M486.8 280.9H490.4V280.4H493.4M486.8 259.4H490.6V258.9H493.4M493.4 259.4V263.4H493.9V267.3H492.7V271.2H492.6V274.0H492.6V278.3H493.0V281.4H493.9V286.1H494.0V289.2H493.6V292.6H493.4V296.6H493.6V298.8M493.4 280.5H497.0V280.3H499.3M493.4 290.2H497.3V290.3H499.3M493.4 262.4H495.7V261.8H498.4V262.4H499.3M499.3 262.4V265.9H499.2V271.2H500.1V277.1H499.1V280.8H499.0V286.0H500.2V290.5H499.2V295.3H499.1V299.8H498.7V302.6H499.1V303.4M499.3 278.5H503.7V278.7H504.4M499.3 297.4H501.5V297.2H504.4M499.3 268.8H503.3V268.4H504.4M504.4 248.8V251.7H504.8V256.4H503.8V260.3H505.3V263.6H503.5V268.3H503.6V272.8H503.9V275.4H504.7V280.5H504.0V283.6H505.3V286.9H503.9V290.7H503.9V294.1H505.2V296.9H505.0V301.2H503.5V303.4M504.4 264.0H507.8V263.7H508.6M504.4 282.2H508.2V282.4H508.6M504.4 248.8H507.2V249.2H508.6M508.6 248.8V252.9H509.0V256.2H508.1V259.4H509.0V265.2H509.1V268.6H508.9V272.4H509.3V276.6H508.1V280.1H507.8V283.9H508.3V288.0H508.9V293.7H509.3V298.2H508.4V301.1M508.6 280.4H510.8V279.9H514.2M508.6 290.2H512.8V290.4H514.2M508.6 265.9H511.0V265.7H514.2M514.2 261.3V266.3H514.6V270.0H514.3V275.8H514.1V279.9H514.3V282.5H514.8V285.2H515.1V291.1H514.8V296.7H514.4V300.3H514.4V301.1M514.2 270.9H518.1V270.6H521.4V270.6H521.6M514.2 261.3H518.1V260.8H521.6M521.6 254.2V258.0H522.4V263.0H521.2V268.6H522.1V271.8H521.0V274.3H522.1V277.1H521.1V282.2H521.2V285.7H520.7V288.4H521.7V291.3H522.5V293.9H521.2V296.0M521.6 272.1H525.4V271.6H527.6V271.6H528.8M521.6 288.3H525.2V288.3H528.3V288.4H528.8M521.6 254.2H525.5V254.4H528.1V253.8H528.8M528.8 254.2V259.1H528.7V264.0H528.0V267.9H529.5V272.0H528.9V276.5H529.7V279.7H529.2V283.8H528.3V286.4H529.0V289.6H529.0V293.6H528.6V298.3M528.8 266.4H532.2V266.3H534.6V266.3H536.1M528.8 276.6H532.5V276.3H535.8V276.6H536.1M528.8 257.4H531.8V257.1H534.3V258.0H536.1M536.1 249.0V251.5H535.2V255.2H536.0V257.7H535.7V263.6H536.7V266.4H536.9V270.5H537.1V274.1H535.7V279.0H536.1V282.4H536.2V287.2H535.8V292.6H536.6V297.7H536.4V298.3M536.1 264.8H538.6V264.3H541.8M536.1 274.7H538.4V274.8H541.8M536.1 283.3H539.2V282.8H541.8M536.1 249.0H539.4V248.4H541.8M541.8 249.0V254.7H541.1V258.8H541.1V262.6H542.6V268.5H541.7V272.0H541.4V277.6H541.6V280.8H542.4V285.1H541.6V290.8H542.3V293.3H542.7V296.1M541.8 272.7H546.0V272.6H547.5M541.8 262.7H544.3V263.3H547.5M547.5 262.7V266.5H548.1V271.8H547.9V275.1H546.7V280.6H548.3V284.3H547.3V288.2H547.1V290.5M547.5 276.8H551.3V277.0H551.7M547.5 263.0H549.9V263.0H551.7M551.7 259.7V264.6H551.4V269.8H552.2V272.7H552.4V275.6H551.4V281.5H552.1V287.0H552.6V290.4M551.7 276.4H554.7V275.9H556.9V276.0H559.2M551.7 259.7H555.9V259.4H559.2M559.2 258.4V262.0H558.7V267.6H560.0V270.7H558.9V275.0H558.4V278.8H559.8V283.9H558.5V287.5H558.8V292.4H558.5V297.3M559.2 267.7H562.6V267.9H564.2M559.2 282.5H563.4V282.5H564.2M559.2 258.4H562.8V258.5H564.2M564.2 258.4V262.1H564.3V267.1H564.0V272.2H564.2V276.0H563.7V281.3H565.0V286.3H563.6V291.3H564.2V297.0H563.2V297.3M564.2 274.4H568.3V274.6H570.1M564.2 261.3H567.5V261.0H569.8V261.2H570.1M570.1 261.3V266.4H569.9V269.8H570.7V273.1H569.2V276.9H570.0V280.1H571.0V283.4H569.3V288.2H569.3V289.7M570.1 274.7H572.7V274.9H575.1V274.9H575.7M570.1 262.1H574.5V262.5H575.7M575.7 262.1V267.0H575.4V272.7H575.4V276.3H575.3V280.7H576.6V285.1H576.2V289.4H574.9V289.7M575.7 280.2H579.2V279.9H581.6M575.7 265.6H577.8V265.2H580.5V265.6H581.6M581.6 265.6V270.5H582.1V275.3H582.3V280.6H582.3V283.2H582.6V287.8H581.8V288.8M581.6 276.9H584.4V277.3H587.9V277.4H588.1M581.6 265.9H585.1V265.3H588.1M588.1 265.9V271.5H588.8V277.4H589.0V282.4H587.7V286.8H587.3V291.3H587.7V294.7M588.1 284.4H590.2V284.8H592.3V284.4H593.4M588.1 268.1H591.3V267.9H593.4M593.4 268.1V270.9H594.1V273.7H594.0V278.1H593.3V280.9H593.3V283.4H594.0V288.4H592.7V292.7H592.8V296.7M593.4 281.4H595.9V281.2H600.3M593.4 271.4H596.4V271.7H599.4V271.0H600.3M600.3 268.8V274.1H599.4V278.1H599.8V282.0H600.1V285.8H599.3V289.3H599.9V294.1H600.7V299.2H600.6V304.8H600.4V306.2M600.3 277.3H604.1V277.4H604.5M600.3 290.9H604.5M600.3 268.8H603.1V269.2H604.5M604.5 265.8V268.4H604.3V271.9H604.1V274.7H604.3V279.8H604.5V282.8H605.1V288.4H604.4V292.1H603.5V294.9H604.2V297.8H605.4V302.5H604.1V306.2M604.5 275.6H608.5M604.5 289.1H608.2V288.8H608.5M604.5 265.8H607.4V265.3H608.5M608.5 265.8V268.4H608.8V272.7H608.2V278.3H607.7V282.5H608.1V288.4H609.1V291.6H607.8V294.2H607.9V299.9H609.3V305.2H608.3V307.1M608.5 287.8H612.5V287.3H615.0V287.9H615.4M608.5 273.5H610.6V274.1H613.2V273.2H615.4M615.4 273.5V279.5H615.1V283.6H614.4V287.5H615.1V290.4H616.1V293.9H614.7V296.8H614.4V301.9H615.5V306.3H615.2V307.1M615.4 288.1H618.6V288.3H621.6M615.4 275.9H619.6V275.5H621.6M621.6 273.9V278.9H622.3V284.5H622.2V287.3H621.0V290.2H621.6V292.9H621.7V298.7H622.6V300.7M621.6 289.4H624.0V289.8H626.1V288.9H628.5M621.6 273.9H625.3V273.5H628.5M628.5 273.9V279.5H628.9V282.0H628.1V287.0H627.6V292.5H629.3V297.7H629.1V298.0M628.5 274.2H631.7V274.1H635.4V274.2H635.8M635.8 274.2V279.5H636.5V283.3H635.6V288.7H635.2V293.6H635.9V298.5H636.2V302.5M635.8 285.6H637.9V286.2H640.8M635.8 275.0H639.5V274.5H640.8M640.8 270.9V276.4H640.1V281.7H641.4V284.9H641.4V288.7H640.4V291.8H640.9V296.4H640.8V299.3H641.3V302.9H640.3V306.4M640.8 280.9H645.0V281.1H646.8M640.8 292.7H643.8V292.4H646.5V292.6H646.8M640.8 270.9H644.8V270.4H646.8M646.8 270.9V274.1H647.8V280.0H646.3V283.0H647.1V287.3H647.0V292.0H647.7V297.2H646.4V302.3H646.7V306.4M646.8 291.6H648.8V292.1H650.9M646.8 278.4H650.3V278.7H650.9M650.9 278.2V281.7H650.6V285.8H650.8V289.3H650.5V292.9H650.3V297.5H650.1V300.8H650.3V303.9M650.9 289.3H653.2V289.7H656.3V289.7H658.1M650.9 278.2H654.3V277.7H658.1M658.1 278.2V283.9H658.2V287.8H657.5V290.9H658.8V296.8H657.9V301.8H658.5V303.3M658.1 283.8H661.5V283.6H662.6M662.6 283.8V288.8H662.9V292.5H663.5V295.1H662.1V298.8H662.9V299.7M662.6 285.6H666.7V285.0H668.0M668.0 285.5V289.1H667.9V292.8H667.8V297.5H667.7V300.9M668.0 285.5H671.1V285.4H673.4M673.4 285.5V291.1H672.5V296.6H673.7V301.5H673.2V302.0M673.4 291.3H675.8V291.4H678.6V290.7H679.6M679.6 289.4V294.5H678.8V299.4H680.3V305.1M679.6 289.4H683.1V290.0H684.2M684.2 287.8V290.8H684.5V294.4H685.1V297.3H684.8V301.5H683.7V304.9H683.9V305.1M684.2 287.8H686.7V288.4H689.8V288.0H690.9M690.9 285.5V288.9H690.1V293.6H691.1V296.2H691.8V301.3H691.0V301.9M690.9 285.5H693.4V285.8H696.1M696.1 285.5V290.8H695.5V295.6H696.5V296.4M696.1 285.7H699.3V285.2H700.3M699.5 285.7V288.7H698.8V292.7M295.2 320.4V325.3H295.5V331.2H296.2V336.7H295.2V339.0M295.2 339.0H297.9V339.6H300.1M295.2 320.4H297.3V320.7H300.1M300.1 320.4V326.2H299.4V331.9H300.2V336.9H300.5V340.8H300.2V343.9M300.1 343.9H303.4V344.5H305.4V344.0H307.0M300.1 338.8H302.3V339.2H306.2V338.7H307.0M300.1 326.5H304.1V326.9H307.0M307.0 321.9V326.7H308.0V330.9H306.7V335.6H307.2V339.5H307.3V343.9M307.0 341.4H310.9V340.9H311.9M307.0 334.5H311.2V334.6H311.9M307.0 321.9H309.5V321.4H311.9M311.9 321.9V324.8H312.2V330.6H310.9V336.3H311.5V340.2H312.8V342.6M311.9 342.6H314.9V343.3H316.1M311.9 322.6H315.2V323.0H316.1M316.1 319.6V325.3H315.4V329.5H317.1V332.3H316.5V335.8H316.9V340.4H316.9V342.6M316.1 338.7H319.6V338.6H321.2M316.1 332.1H320.0V332.2H321.2M316.1 319.6H319.4V319.5H321.2M321.2 315.8V318.7H322.2V322.7H320.2V326.2H322.1V329.8H321.0V335.7H321.8V339.5H320.6V341.0M321.2 341.0H324.2V341.7H327.5V341.7H328.3M321.2 333.3H324.2V333.2H327.6V333.5H328.3M321.2 315.8H324.0V316.0H327.0V316.1H328.3M328.3 304.7V309.0H329.1V314.9H328.5V317.8H329.3V323.6H327.5V328.5H328.6V333.3H328.8V335.8H327.9V339.5H328.6V341.0M328.3 325.3H331.0V324.8H333.1V325.3H335.3M328.3 318.0H330.8V318.3H333.1V318.3H335.3M328.3 304.7H331.2V304.5H334.4V304.9H335.3M335.3 304.7V307.3H335.8V310.7H336.3V316.4H336.0V322.0H334.4V324.6H335.1V325.3M335.3 324.4H338.3V324.5H339.9M335.3 308.4H339.6V308.6H339.9M339.9 307.8V310.7H339.1V314.0H340.6V317.6H340.6V323.4H340.4V326.0M339.9 326.0H342.5V325.6H344.2M339.9 316.0H344.2M339.9 307.8H343.4V307.5H344.2M344.2 301.6V307.0H345.1V309.6H344.9V314.6H343.3V317.7H344.9V320.9H345.0V325.3H345.1V326.0M344.2 317.5H346.5V317.7H349.6M344.2 310.4H348.2V310.9H349.7M344.2 301.6H347.6V301.2H349.7M349.7 301.6V304.5H350.7V307.1H349.2V311.3H348.8V314.9H350.4V319.6H349.9V322.2H349.5V325.1H349.5V326.8M349.7 326.8H352.8V326.6H356.3M349.7 321.3H354.0V321.2H356.3M349.7 308.2H353.9V308.1H356.3M356.3 298.5V303.4H355.9V309.2H355.3V314.5H355.6V320.5H355.5V326.2H356.1V326.8M356.3 323.6H358.4V323.1H361.3V324.3H362.7M356.3 307.3H359.7V306.8H361.9V307.5H362.7M356.3 298.5H360.5V298.1H362.7M362.7 298.5V302.4H362.8V308.0H362.4V312.1H362.6V317.6H362.2V321.7H363.2V325.5M362.7 325.6H366.8V325.6H369.1V325.3H369.5M362.7 317.5H365.6V317.3H369.5M362.7 304.6H366.6V304.9H369.5M369.5 286.0V291.2H368.8V297.1H370.4V299.6H369.8V305.3H369.6V309.7H369.7V314.2H369.7V319.0H370.4V321.8H369.0V324.3H368.6V325.6M369.5 315.4H373.8V315.1H376.7M369.5 297.4H374.0V297.0H376.7M369.5 309.5H372.0V309.0H375.0V309.1H376.7M369.5 286.0H372.4V285.4H375.9V285.9H376.7M376.7 285.8V289.4H376.2V292.6H376.2V295.9H376.8V299.7H377.7V302.9H377.6V306.6H376.7V312.4H377.3V315.4M376.7 313.8H380.1V313.5H382.0M376.7 301.3H378.8V300.8H382.0M376.7 285.8H380.8V285.4H382.0M382.0 284.2V289.8H381.4V294.2H382.7V298.0H382.0V301.4H381.9V305.0H382.6V308.0H381.1V313.7H381.3V313.8M382.0 301.4H385.8V301.1H387.0M382.0 295.9H384.5V295.4H387.0M382.0 284.2H386.2V284.2H387.0M387.0 284.2V289.5H386.5V295.4H386.2V298.4H386.1V303.0H386.8V305.8H387.0V308.9M387.0 308.9H389.3V309.1H391.3M387.0 295.8H389.9V295.6H391.3M391.3 287.7V290.3H390.7V295.0H390.6V298.4H391.3V303.6H392.1V307.2H391.7V309.8H392.1V314.6H392.1V317.9H391.3V319.1M391.3 319.1H393.4V319.7H397.2V319.6H397.4M391.3 304.3H394.8V303.8H397.1V304.7H397.4M391.3 287.7H394.3V287.9H396.6V287.3H397.4M397.4 287.7V291.5H397.1V294.9H398.0V298.4H397.2V302.6H398.4V306.2H397.8V309.9H398.0V313.8H396.4V318.1H397.0V321.5H397.0V324.0H397.8V328.4H397.6V329.5M397.4 329.5H400.3V329.5H403.5V330.2H404.5M397.4 305.8H399.6V305.6H403.0V305.9H404.5M397.4 321.0H399.6V320.9H402.5V320.6H404.5M397.4 296.1H399.5V296.1H401.8V296.4H404.5M404.5 296.1V300.0H405.4V305.7H405.2V309.7H405.3V312.4H405.0V316.2H405.2V318.8H404.6V321.5H404.1V326.0H403.8V330.9H404.5V334.2H404.6V335.4M404.5 335.4H406.6V335.8H408.7M404.5 316.2H408.7M404.5 328.3H408.1V328.4H408.7M404.5 298.2H407.2V298.1H408.7M408.7 298.1V301.2H409.6V307.0H409.2V312.6H409.3V317.4H409.2V323.1H408.2V328.1H408.1V332.3H408.4V337.0H409.0V339.2M408.7 339.2H412.8V338.5H414.5M408.7 306.6H412.5V306.4H414.5M408.7 316.9H413.1V317.3H414.5M408.7 331.6H412.9V331.3H414.5M408.7 298.1H412.2V298.3H414.5M414.5 289.3V294.6H414.2V299.0H414.7V304.8H414.6V309.9H415.1V312.7H414.7V318.5H415.1V324.2H413.8V329.4H414.1V335.0H415.1V338.8H414.7V339.2M414.5 324.9H418.8V325.0H420.2M414.5 303.2H416.5V302.8H419.8V303.1H420.2M414.5 314.9H417.2V314.7H420.2M414.5 289.3H416.6V289.0H420.2M420.2 289.3V294.8H420.7V298.2H420.2V302.2H419.3V306.6H419.7V312.4H420.5V317.8H419.3V322.8H420.8V324.9M420.2 322.8H422.8V322.8H426.2V322.7H427.5M420.2 313.2H424.4V312.9H427.5M420.2 297.8H423.9V297.6H427.2V297.6H427.5M427.5 297.6V303.2H427.4V309.2H427.4V312.6H426.8V315.3H426.7V320.2H427.2V322.8M427.5 320.0H430.0V320.7H432.1M427.5 308.5H430.3V308.3H432.1M427.5 297.6H429.7V297.3H431.8V297.9H432.1M432.1 283.3V289.1H431.3V294.6H431.3V297.7H432.6V302.4H431.7V307.4H431.4V313.0H432.2V318.8H432.3V320.0M432.1 318.9H436.2V319.0H437.9M432.1 298.0H434.8V298.2H437.9M432.1 312.7H436.2V312.6H437.9M432.1 283.3H434.1V282.9H436.8V283.1H437.9M437.9 283.3V287.4H437.7V290.2H436.9V295.7H437.2V301.2H437.7V303.9H438.5V308.9H438.9V313.3H438.7V317.6H437.4V321.5H438.2V327.1H438.5V332.6M437.9 332.6H441.2V332.5H444.5M437.9 320.6H440.8V320.0H443.8V320.7H444.5M437.9 302.3H441.6V302.7H444.5M444.5 302.3V308.3H444.8V311.3H445.3V314.1H444.6V317.9H444.1V321.3H443.7V325.1H443.7V329.8H444.1V334.9H445.4V336.5M444.5 336.5H448.3V336.9H450.6V337.3H451.3M444.5 322.7H448.2V322.3H451.3M444.5 308.7H448.8V308.7H451.1V309.3H451.3M451.3 300.5V303.2H451.6V306.1H451.0V311.7H452.1V317.1H450.7V322.9H450.6V328.6H451.8V334.5H452.3V338.8H450.9V339.7M451.3 339.7H454.1V339.5H457.5V339.2H458.0M451.3 310.1H454.4V310.5H458.0M451.3 328.6H455.1V328.9H458.0M451.3 300.5H453.6V300.1H455.9V300.4H458.0M458.0 300.5V305.5H458.5V309.7H458.1V313.1H458.0V315.9H458.9V321.6H457.1V324.2H457.7V328.5H457.9V332.2H458.2V336.1H457.8V338.7H458.1V339.7M458.0 339.5H462.1V339.4H464.4M458.0 316.0H462.2V315.6H464.4M458.0 300.7H462.1V300.6H464.4M464.4 298.0V302.5H464.9V308.0H464.2V311.7H465.1V315.0H465.2V320.0H465.1V324.7H463.6V329.7H464.4V332.9H463.6V336.3H463.7V339.3H465.1V339.5M464.4 335.8H468.9V335.9H471.3M464.4 306.6H466.7V306.9H470.1V306.7H471.3M464.4 323.6H468.2V323.0H471.3M464.4 298.0H468.5V298.5H471.3M471.3 298.0V303.6H470.4V306.6H471.0V311.8H470.6V317.0H471.5V322.6H471.0V326.5H470.4V330.8H471.8V335.1H471.3V338.0M471.3 338.0H475.2V337.7H477.1M471.3 315.1H474.0V314.7H477.1M471.3 328.6H474.8V328.2H477.1M471.3 299.1H474.3V298.8H477.1M477.1 297.1V301.4H477.4V305.2H476.7V310.7H477.4V314.3H476.4V318.1H478.0V323.5H476.5V328.2H476.1V333.8H478.0V337.1H476.8V338.0M477.1 337.9H479.6V338.2H482.5V337.1H484.5M477.1 312.4H480.9V311.8H484.2V312.5H484.5M477.1 327.5H481.0V327.3H484.5M477.1 297.1H479.3V297.3H482.1V297.3H484.5M484.5 296.3V299.6H485.1V302.9H483.7V305.6H484.7V309.2H484.7V312.8H484.4V318.3H485.4V321.0H485.4V325.2H485.0V331.0H483.9V334.8H485.3V338.7M484.5 338.7H488.8V339.2H490.3M484.5 311.6H486.7V312.0H489.1V311.2H490.3M484.5 321.8H486.9V322.0H490.3M484.5 332.7H487.4V332.9H490.2M484.5 296.3H488.8V295.8H490.3M490.3 296.3V302.1H490.0V306.3H489.5V309.7H490.1V315.4H490.4V320.7H491.0V323.5H489.9V328.9H490.8V333.4H490.1V337.7H489.3V338.7M490.3 335.5H493.1V334.9H495.0M490.3 319.8H494.2V320.0H495.0M490.3 302.9H492.8V303.0H495.0M495.0 301.3V306.3H495.6V309.5H495.2V313.8H495.8V317.7H494.5V321.3H495.0V327.2H495.4V332.3H494.9V335.5M495.0 335.5H499.3V335.4H501.6V335.9H502.3M495.0 313.6H498.5V314.0H500.5V313.7H502.3M495.0 328.5H498.5V328.5H501.6V328.6H502.3M495.0 301.3H498.2V300.8H501.1V300.7H502.3M502.3 298.5V303.3H502.9V306.1H502.8V308.7H501.9V314.2H502.4V319.9H503.0V323.9H501.9V327.1H501.4V332.1H502.9V334.8H502.3V335.5M502.3 332.2H505.9V332.1H507.5M502.3 311.2H505.1V311.2H507.5M502.3 323.5H505.5V323.0H507.5M502.3 298.5H506.1V298.2H507.5M507.5 290.9V294.3H507.5V299.1H507.0V302.7H507.4V307.6H507.2V310.3H507.5V314.4H508.5V319.0H506.6V323.7H506.7V327.5H506.6V332.1M507.5 331.9H509.9V332.6H512.4V332.6H514.0M507.5 304.6H510.7V304.5H514.0M507.5 314.7H510.4V314.1H513.5V314.3H514.0M507.5 290.9H510.1V290.6H512.5V290.4H514.0M514.0 290.9V294.0H514.6V298.6H514.9V302.1H514.2V306.8H513.4V311.4H514.4V316.7H514.7V319.3H514.5V322.9H514.5V326.0H513.7V329.9H514.4V331.9M514.0 330.7H518.0V329.9H520.5M514.0 316.5H516.6V316.9H519.4V316.7H520.5M514.0 300.4H516.3V300.3H519.2V300.2H520.5M520.5 299.0V302.2H519.9V304.8H519.7V310.0H519.6V313.4H520.3V316.5H520.2V319.9H520.3V323.0H519.5V328.7H521.0V330.7M520.5 330.3H523.1V331.0H526.3M520.5 311.5H523.2V311.9H525.3V311.6H526.3M520.5 299.0H524.8V298.9H526.3M526.3 294.6V298.2H526.1V301.0H527.0V305.2H525.8V309.5H526.3V314.9H525.8V319.1H526.2V322.0H525.6V325.3H526.2V329.8H526.8V330.3M526.3 327.0H528.6V327.8H531.6M526.3 311.2H529.2V311.4H531.6M526.3 319.4H530.5V318.8H531.6M526.3 294.6H529.8V294.2H531.6M531.6 290.7V294.8H532.4V297.6H532.3V300.1H532.3V302.9H531.9V305.8H532.1V309.1H530.7V314.6H531.7V320.1H532.1V322.9H530.7V327.5M531.6 327.5H535.7V327.0H538.2M531.6 299.0H535.5V299.1H538.2M531.6 311.2H534.3V311.2H537.6V310.8H538.2M531.6 290.7H534.0V290.2H536.7V290.3H538.2M538.2 290.7V295.8H538.8V299.8H538.2V305.5H537.7V309.7H538.7V313.4H538.2V316.0H538.6V319.1H537.8V322.4H538.7V326.3H539.2V327.5M538.2 321.5H542.6V321.8H543.3M538.2 302.5H541.2V302.1H543.3M538.2 290.9H541.5V290.5H543.3M543.3 290.9V296.3H543.5V301.8H542.3V306.6H543.5V311.8H542.7V316.4H542.8V321.5M543.3 321.2H545.5V320.6H549.8V321.6H550.6M543.3 303.1H546.3V302.8H548.7V303.7H550.6M543.3 291.7H547.1V292.0H549.8V291.4H550.6M550.6 289.0V294.1H550.1V298.2H550.9V301.2H549.9V307.1H551.4V312.7H550.8V317.0H549.9V320.3H549.9V321.2M550.6 313.5H553.7V313.0H556.0V313.7H558.1M550.6 297.2H553.2V297.5H556.8V297.2H558.1M550.6 289.0H552.7V288.8H555.9V288.5H558.1M558.1 288.0V290.7H558.2V294.2H557.9V299.9H558.4V303.4H558.0V309.3H558.9V313.3H558.2V317.4H557.4V318.9M558.1 318.9H560.7V318.4H563.0V319.6H563.7M558.1 303.0H561.4V303.1H563.7M558.1 288.0H561.5V288.4H563.7M563.7 288.0V291.6H563.2V294.8H564.4V299.0H562.7V303.6H564.4V309.3H564.6V314.8H563.0V319.1H564.1V322.4M563.7 322.4H566.6V321.7H570.0M563.7 313.1H567.8V313.0H570.0M563.7 296.6H567.3V296.8H569.4V296.1H570.0M570.0 288.9V292.6H570.1V295.8H569.8V299.9H570.2V303.2H570.3V306.4H571.0V309.7H569.3V313.2H570.2V317.3H570.4V320.1H569.9V322.8M570.0 322.8H574.5V323.4H577.1M570.0 300.2H572.3V300.4H575.7V300.2H577.1M570.0 313.3H574.0V313.1H576.8V313.8H577.1M570.0 288.9H572.2V289.4H574.3V289.2H577.1M577.1 288.9V291.5H578.1V295.2H577.6V301.0H578.1V304.1H577.9V308.4H577.5V311.8H576.4V316.3H577.9V320.3H578.0V322.8M577.1 320.2H579.2V320.9H581.5M577.1 302.9H580.5V303.5H581.6M577.1 314.2H579.3V313.7H581.6M577.1 292.5H580.4V291.9H581.6M581.6 292.5V297.7H581.8V303.7H581.8V307.4H581.4V312.9H581.3V318.6H581.4V320.2M581.6 319.2H583.9V319.6H587.1M581.6 305.3H585.0V304.8H587.1M581.6 294.8H584.9V294.6H587.1M587.1 287.6V293.1H587.9V298.9H586.6V301.8H587.8V306.8H586.6V310.8H588.0V316.2H588.0V319.2M587.1 312.4H589.6V312.4H591.7M587.1 296.8H589.3V296.5H591.7M587.1 287.6H590.9V287.8H591.7M591.7 287.6V292.0H592.1V297.7H590.8V303.1H592.4V307.9H591.5V312.3H591.0V317.4H591.8V321.9H592.1V324.7H590.8V325.8M591.7 325.8H593.9V326.3H596.2V325.6H598.7M591.7 306.8H596.0V307.3H598.7M591.7 295.9H595.6V296.5H598.7M598.7 295.9V299.7H599.4V304.2H598.4V307.6H597.7V312.6H598.3V318.1H598.3V321.6H599.3V325.5H599.7V327.7M598.7 327.7H603.0V327.1H604.3M598.7 308.7H602.9V308.7H604.3M598.7 322.5H603.1V322.8H604.3M598.7 300.5H601.6V300.4H604.3M604.3 299.0V304.1H604.8V309.7H603.9V312.5H604.0V316.1H603.5V321.0H604.3V325.7H605.0V327.7M604.3 321.6H608.5V322.1H610.8M604.3 313.8H607.4V313.7H610.8M604.3 299.0H607.2V299.2H610.5V298.5H610.8M610.8 297.4V302.3H610.2V307.7H611.1V313.5H610.5V318.4H611.0V323.3H611.7V327.1H610.2V329.6M610.8 329.6H613.1V329.6H616.5M610.8 314.7H614.5V314.1H616.5M610.8 297.4H613.5V296.9H615.9V296.8H616.5M616.5 291.2V296.5H617.2V301.5H616.5V304.5H616.3V309.6H617.1V314.2H617.3V318.7H617.2V324.3H615.8V327.4H617.5V329.6M616.5 322.8H619.6V322.7H621.8M616.5 299.3H619.7V299.3H621.8M616.5 312.2H620.7V311.7H621.8M616.5 291.2H619.9V291.5H621.8M621.8 291.2V296.4H622.0V299.4H621.6V305.1H620.9V310.2H621.5V315.4H621.2V320.1H622.6V322.8M621.8 322.0H626.2M621.8 304.0H623.9V304.4H626.3M621.8 312.4H625.5V312.4H626.3M621.8 294.8H626.0V294.8H626.3M626.3 292.7V295.5H625.5V299.7H626.9V305.0H625.6V309.4H625.9V312.6H626.0V317.5H627.1V320.3H625.9V322.0M626.3 321.5H629.5V321.3H632.8M626.3 300.9H630.6V300.6H632.8M626.3 292.7H630.4V292.8H632.8M632.8 292.7V297.1H633.2V302.6H632.5V307.3H631.9V312.6H633.5V317.5H633.2V322.0H632.5V324.0M632.8 324.0H635.2V324.2H637.0M632.8 310.8H636.1V311.0H637.0M632.8 294.6H636.5V294.5H637.0M637.0 294.6V299.7H637.5V302.4H637.3V307.7H637.8V310.5H636.2V314.5H637.5V317.4H638.0V322.4H636.0V325.7M637.0 325.7H640.1V325.2H641.3M637.0 317.3H640.6V317.0H641.3M637.0 301.5H639.4V301.3H641.3M641.3 297.0V301.6H640.5V304.7H640.4V308.6H642.3V313.8H642.0V319.5H640.8V324.3H641.1V325.7M641.3 319.6H645.2V319.7H645.6M641.3 307.9H645.6M641.3 297.0H644.9V297.3H645.6M645.6 297.0V300.6H646.5V304.6H646.2V310.3H645.6V314.3H645.5V317.2H644.7V323.0H645.9V325.8H645.7V329.2H646.2V331.8M645.6 331.8H647.6V332.1H650.2M645.6 322.2H650.0V321.7H650.2M645.6 306.1H648.7V305.7H650.2M650.2 306.1V311.2H651.0V314.6H649.7V320.6H650.9V325.4H650.8V330.2H649.8V331.8M650.2 328.8H652.8V328.1H655.2M650.2 323.4H652.5V322.8H655.1M650.2 306.5H654.4V306.2H655.2M655.2 301.6V307.3H655.1V310.8H656.0V315.8H654.9V318.8H655.0V322.9H655.8V327.8H655.2V328.8M655.2 324.4H658.6V325.0H660.8M655.2 310.5H659.3V310.8H660.8M655.2 301.6H657.3V301.4H660.8M660.8 299.4V304.5H661.6V310.3H659.9V314.0H661.1V317.6H661.3V320.9H661.0V324.0H660.1V324.4M660.8 324.1H664.4V324.2H665.5M660.8 314.8H665.2V314.7H665.5M660.8 299.4H664.8V299.2H665.5M665.5 299.4V304.0H666.0V308.9H665.4V311.6H666.2V314.4H665.3V319.7H666.5V324.1M665.5 321.5H667.8V322.3H669.9V320.8H670.2M665.5 303.1H669.1V303.5H670.2M670.2 303.1V307.2H669.4V312.7H669.6V315.9H669.5V319.6H670.0V322.8H669.5V324.1M670.2 324.1H672.3V324.1H674.5M670.2 315.3H672.5V315.7H674.5M670.2 305.8H674.2V305.8H674.5M674.5 305.8V311.6H675.4V316.3H674.7V322.3H674.3V325.6M674.5 325.6H676.7V325.2H680.0V326.0H680.6M674.5 305.9H678.0V305.5H680.1V305.8H680.6M680.6 305.9V310.8H680.2V314.4H680.4V320.1H680.5V322.9H680.3V325.6M680.6 314.1H683.9V314.9H687.2V314.6H688.0M680.6 307.8H683.6V307.7H685.9V307.3H688.0M688.0 297.3V301.2H687.0V306.0H688.4V311.8H687.5V314.9M688.0 314.9H691.9V315.1H692.4M688.0 297.3H692.4M692.4 296.6V301.8H691.6V306.3H693.3V310.7H691.5V313.6H692.3V314.9M692.4 313.2H696.1V312.8H696.5M692.4 296.6H696.3V296.9H696.5M696.5 296.6V302.3H695.9V307.1H697.1V313.0H696.2V313.2M696.5 305.9H700.0V306.2H701.7M696.5 296.7H698.6V297.3H701.7M699.5 296.7V301.3H698.8V305.9" fill="none" stroke="#ff1018" stroke-width="1" shape-rendering="crispEdges" opacity="0.92"/><path d="M330.0 206.8H335.5V208.3H336.5V209.7H337.5V211.2H338.0V212.6H338.5V214.1V215.5V217.0V218.4V219.9V221.4V222.8V224.3H338.0V225.7H337.0V227.2H336.5V228.6H335.5V230.1H329.0V228.6H328.5V227.2H328.0V225.7H328.5V224.3V222.8V221.4H329.5V219.9H330.0V218.4H329.5V217.0H330.0V215.5V214.1V212.6H330.5V211.2V209.7H330.0V208.3ZM302.0 220.5H309.5V222.0H310.0V223.5H310.5V225.0V226.4H312.0V227.9H312.5V229.4H312.0V230.9H311.5V232.4H311.0V233.9V235.4H310.5V236.9H310.0V238.4V239.8V241.3H309.5V242.8H309.0V244.3H302.5V242.8V241.3H303.0V239.8V238.4V236.9H303.5V235.4H303.0V233.9H303.5V232.4V230.9H303.0V229.4V227.9H302.5V226.4V225.0H302.0V223.5V222.0ZM274.5 234.5H280.5V236.0H281.5V237.4V238.9H282.0V240.4V241.9V243.3H281.5V244.8H280.5V246.3V247.8H280.0V249.2V250.7H280.5V252.2H281.0V253.6H281.5V255.1V256.6V258.1H281.0V259.5V261.0H275.5V259.5H275.0V258.1H274.5V256.6V255.1H275.0V253.6V252.2H274.5V250.7H274.0V249.2V247.8H273.5V246.3H274.0V244.8H274.5V243.3V241.9V240.4H274.0V238.9H274.5V237.4V236.0ZM283.0 232.7H292.0V234.2H293.0V235.7H293.5V237.2H294.0V238.8H294.5V240.3H295.0V241.8V243.3V244.8V246.3H294.5V247.8V249.4V250.9V252.4V253.9H294.0V255.4H293.5V256.9V258.5H293.0V260.0H292.5V261.5V263.0H284.5V261.5H284.0V260.0V258.5H283.5V256.9H282.5V255.4V253.9H282.0V252.4H281.5V250.9H281.0V249.4H280.5V247.8H280.0V246.3V244.8H280.5V243.3H281.0V241.8H281.5V240.3V238.8V237.2V235.7H282.0V234.2H283.0ZM266.0 245.6H275.0V247.1H276.5V248.6H278.0V250.0V251.5H278.5V253.0H279.0V254.5V256.0V257.4H278.0V258.9H277.5V260.4H277.0V261.9H276.5V263.4H276.0V264.8H274.5V266.3V267.8V269.3V270.8V272.2H275.0V273.7V275.2H274.0V276.7H274.5V278.2V279.6V281.1V282.6H265.5V281.1H264.5V279.6H265.0V278.2V276.7H265.5V275.2H266.0V273.7V272.2H265.5V270.8V269.3H265.0V267.8V266.3H264.0V264.8V263.4H264.5V261.9V260.4V258.9H264.0V257.4H264.5V256.0H264.0V254.5V253.0V251.5V250.0H264.5V248.6H265.5V247.1H266.0ZM243.5 263.7H251.5V265.2H252.5V266.7H253.5V268.3H254.0V269.8V271.3H253.5V272.8H253.0V274.4V275.9V277.4V278.9H253.5V280.5H254.5V282.0H254.0V283.5V285.0H253.0V286.6H252.5V288.1H251.5V289.6H244.0V288.1H243.0V286.6H242.0V285.0H241.5V283.5H241.0V282.0V280.5V278.9H241.5V277.4H242.5V275.9H243.0V274.4V272.8V271.3H242.5V269.8V268.3H243.0V266.7H243.5V265.2ZM316.5 249.5H324.5V251.0H325.5V252.5H326.5V254.0H327.5V255.5H328.0V257.0H328.5V258.6H328.0V260.1H327.5V261.6H326.5V263.1V264.6H326.0V266.1H325.5V267.6H317.0V266.1H316.0V264.6H315.0V263.1V261.6V260.1V258.6V257.0V255.5V254.0H315.5V252.5V251.0H316.5ZM302.0 259.3H307.5V260.7H308.0V262.2H308.5V263.6H308.0V265.1H308.5V266.5H308.0V268.0H308.5V269.4V270.8H309.0V272.3H308.5V273.7V275.2H307.5V276.6H301.5V275.2H300.5V273.7H299.5V272.3H299.0V270.8H299.5V269.4H300.0V268.0V266.5V265.1V263.6V262.2H300.5V260.7H302.0ZM310.5 265.0H314.5V266.6V268.2V269.9V271.5H310.5V269.9H310.0V268.2V266.6H310.5ZM283.5 265.0H293.5V266.5H294.0V268.0H295.5V269.5V271.0H296.5V272.5H297.0V274.0H297.5V275.5V277.0H298.0V278.5V280.0V281.5H297.5V283.0H297.0V284.5V286.0H296.5V287.5H296.0V289.0H295.0V290.5H293.5V292.0H283.0V290.5H282.0V289.0H281.0V287.5H280.5V286.0V284.5V283.0H281.0V281.5H281.5V280.0H281.0V278.5H282.0V277.0H282.5V275.5H283.5V274.0H284.0V272.5V271.0H283.5V269.5V268.0H283.0V266.5H283.5ZM198.5 315.7H207.0V317.2H207.5V318.7H208.0V320.2H208.5V321.6H209.5V323.1V324.6H210.0V326.1V327.6H210.5V329.1H211.0V330.5H211.5V332.0V333.5V335.0V336.5H211.0V338.0H210.5V339.5H209.5V340.9V342.4H208.5V343.9H207.5V345.4H199.0V343.9H197.5V342.4H196.0V340.9H195.0V339.5V338.0H194.5V336.5V335.0V333.5V332.0H194.0V330.5V329.1H193.5V327.6V326.1V324.6H194.0V323.1H195.0V321.6H195.5V320.2H197.0V318.7H197.5V317.2H198.5ZM213.5 316.0H220.0V317.5V319.0H220.5V320.5V322.0H221.0V323.5H220.5V325.0H221.0V326.5H221.5V328.0H221.0V329.6V331.1V332.6H221.5V334.1V335.6V337.1V338.6V340.1H220.5V341.6H219.5V343.1H213.5V341.6H213.0V340.1H213.5V338.6H213.0V337.1H212.0V335.6H211.5V334.1H211.0V332.6V331.1H212.0V329.6H213.0V328.0H214.0V326.5V325.0V323.5V322.0H213.5V320.5H213.0V319.0V317.5H213.5ZM220.5 312.0H226.5V313.5H227.0V315.0V316.5V318.0V319.5H227.5V321.0V322.5V324.0V325.5H227.0V327.0H226.5V328.5V330.0H220.5V328.5H219.5V327.0V325.5V324.0H219.0V322.5V321.0H220.0V319.5H219.5V318.0V316.5V315.0V313.5H220.5ZM237.5 316.9H245.0V318.4H245.5V319.9H246.0V321.4V323.0H245.0V324.5H244.5V326.0V327.5H245.0V329.0H244.5V330.6H245.5V332.1V333.6V335.1H237.5V333.6H236.5V332.1H236.0V330.6H235.5V329.0H236.0V327.5H235.5V326.0V324.5V323.0H236.5V321.4H237.5V319.9V318.4ZM253.0 308.9H261.5V310.5H262.5V312.0H263.5V313.6V315.1H262.5V316.7H261.5V318.3V319.8V321.4H253.0V319.8H251.5V318.3H251.0V316.7V315.1V313.6H251.5V312.0H252.0V310.5H253.0ZM255.0 324.9H263.5V326.4H264.0V327.9H264.5V329.4H265.0V330.9H265.5V332.4V333.9H266.0V335.4V336.9H265.5V338.4H265.0V339.9H264.5V341.4V343.0H265.5V344.5V346.0H266.0V347.5V349.0H266.5V350.5V352.0V353.5H266.0V355.0H265.5V356.5H264.5V358.0H256.0V356.5H255.0V355.0H254.5V353.5H253.5V352.0V350.5H254.0V349.0H254.5V347.5V346.0V344.5V343.0H254.0V341.4H253.5V339.9H252.5V338.4V336.9V335.4H253.0V333.9H253.5V332.4V330.9V329.4H253.0V327.9H254.0V326.4H255.0ZM270.0 306.6H276.5V308.1H278.0V309.6H278.5V311.2H279.0V312.7H279.5V314.2V315.7V317.2V318.7H280.0V320.2V321.8V323.3H279.5V324.8H279.0V326.3H278.5V327.8H278.0V329.4H278.5V330.9H278.0V332.4H278.5V333.9H278.0V335.4V336.9H277.0V338.4H276.5V340.0H276.0V341.5V343.0H269.5V341.5H269.0V340.0H268.5V338.4H268.0V336.9V335.4H267.5V333.9V332.4H267.0V330.9V329.4H266.0V327.8H265.0V326.3V324.8H265.5V323.3H266.0V321.8H266.5V320.2H267.5V318.7H268.0V317.2V315.7V314.2V312.7H268.5V311.2H269.0V309.6H269.5V308.1H270.0ZM280.0 297.4H290.0V298.9H291.5V300.4H292.0V301.8V303.3H291.5V304.8V306.3H291.0V307.8V309.2H291.5V310.7H292.5V312.2V313.7V315.2V316.6V318.1V319.6H293.0V321.1V322.6H292.5V324.0H291.0V325.5H290.0V327.0H280.0V325.5H279.5V324.0H279.0V322.6H278.5V321.1V319.6H277.5V318.1V316.6H278.0V315.2V313.7V312.2H277.5V310.7H277.0V309.2V307.8H277.5V306.3V304.8H277.0V303.3H277.5V301.8H278.0V300.4H279.0V298.9H280.0ZM280.5 331.7H284.5V333.2H285.0V334.6V336.1H284.5V337.5V339.0V340.4V341.9H284.0V343.3H284.5V344.8H285.0V346.2H284.5V347.7H281.0V346.2H281.5V344.8H281.0V343.3V341.9V340.4H280.5V339.0V337.5H280.0V336.1H280.5V334.6H280.0V333.2H280.5ZM288.5 328.0H296.5V329.5H297.0V331.0V332.4H298.0V333.9H298.5V335.4V336.9H299.0V338.3H298.5V339.8V341.3H298.0V342.8H297.5V344.3H297.0V345.7V347.2V348.7V350.2V351.6H296.0V353.1H295.5V354.6H286.5V353.1H285.5V351.6V350.2H286.0V348.7H285.5V347.2H286.0V345.7V344.3H286.5V342.8H287.0V341.3V339.8H286.0V338.3V336.9H285.5V335.4H286.0V333.9H286.5V332.4H287.0V331.0H287.5V329.5H288.5ZM281.5 280.3H286.0V281.9H287.0V283.4H286.5V285.0H287.0V286.6V288.2V289.8H286.5V291.3H286.0V292.9H281.0V291.3H280.5V289.8H280.0V288.2H280.5V286.6V285.0H281.0V283.4H281.5V281.9ZM172.5 333.5H178.0V335.0H179.0V336.4H179.5V337.9H179.0V339.3V340.8V342.2H179.5V343.7H179.0V345.2H178.5V346.6V348.1V349.5H178.0V351.0H173.0V349.5H172.5V348.1H172.0V346.6H171.5V345.2H170.5V343.7V342.2V340.8H171.0V339.3H170.5V337.9V336.4H171.0V335.0H172.5ZM403.0 367.0H406.0V368.5V369.9H405.5V371.4H406.0V372.9H405.5V374.4V375.8V377.3H405.0V378.8V380.2V381.7V383.2V384.6H405.5V386.1V387.6V389.1V390.5H405.0V392.0H401.5V390.5V389.1V387.6V386.1V384.6V383.2H401.0V381.7H401.5V380.2H402.5V378.8H403.5V377.3H404.0V375.8V374.4V372.9H404.5V371.4H404.0V369.9H403.5V368.5H403.0ZM546.0 321.0H550.0V322.5V324.1V325.6V327.1H550.5V328.6V330.2V331.7H551.0V333.2H551.5V334.8H551.0V336.3H550.5V337.8H550.0V339.4V340.9V342.4H549.5V343.9H550.0V345.5H549.5V347.0H545.0V345.5H544.0V343.9H543.5V342.4H544.0V340.9H545.5V339.4V337.8V336.3H544.5V334.8V333.2H544.0V331.7H544.5V330.2H545.0V328.6H545.5V327.1H546.0V325.6H546.5V324.1H546.0V322.5ZM572.5 322.0H577.5V323.5H578.5V324.9H579.0V326.4V327.8H578.5V329.3V330.8H578.0V332.2H578.5V333.7H578.0V335.2H577.5V336.6V338.1V339.5V341.0H571.5V339.5H571.0V338.1V336.6H572.0V335.2V333.7V332.2V330.8V329.3H571.5V327.8V326.4H572.0V324.9V323.5H572.5ZM421.0 326.0H426.5V327.5H427.0V329.1H427.5V330.6H428.0V332.2H429.5V333.7V335.2H429.0V336.8V338.3V339.8V341.4V342.9H428.0V344.5H427.0V346.0H421.0V344.5H420.0V342.9V341.4V339.8H420.5V338.3H420.0V336.8V335.2H419.5V333.7H420.0V332.2V330.6V329.1H420.5V327.5H421.0ZM404.0 337.0H412.0V338.4H413.5V339.9H413.0V341.3H414.0V342.7V344.1H414.5V345.6H413.0V347.0H404.0V345.6H403.0V344.1H402.0V342.7V341.3H402.5V339.9H403.5V338.4H404.0ZM376.5 231.0H383.0V232.5H383.5V234.0H384.0V235.5V237.0V238.5H384.5V240.0H384.0V241.5H383.5V243.0H376.0V241.5H375.5V240.0V238.5V237.0H376.0V235.5V234.0V232.5H376.5ZM391.5 232.0H396.5V233.6H397.0V235.2H396.5V236.8H396.0V238.4H395.5V240.0H391.0V238.4V236.8V235.2H391.5V233.6ZM415.5 226.0H423.0V227.4H424.0V228.9H423.5V230.3H424.0V231.7V233.1H423.5V234.6V236.0H416.0V234.6H415.0V233.1H414.5V231.7V230.3V228.9H415.5V227.4ZM432.0 207.0H436.0V208.5H437.0V209.9V211.4V212.9H436.0V214.4V215.8V217.3V218.8H435.5V220.2H435.0V221.7H435.5V223.2H435.0V224.6V226.1H434.0V227.6H433.5V229.1V230.5H434.0V232.0H431.5V230.5H432.0V229.1H431.0V227.6V226.1H430.5V224.6V223.2V221.7V220.2H431.0V218.8V217.3H430.5V215.8V214.4V212.9H431.5V211.4V209.9H432.0V208.5ZM447.0 221.0H451.0V222.4V223.9H450.5V225.3V226.7H451.0V228.1V229.6V231.0H446.5V229.6H446.0V228.1V226.7V225.3V223.9V222.4H447.0ZM458.5 224.0H465.5V225.6H466.0V227.2H466.5V228.8H466.0V230.4H465.0V232.0H459.0V230.4H458.5V228.8H458.0V227.2V225.6H458.5ZM477.0 215.0H481.5V216.4H482.0V217.9V219.3V220.8V222.2V223.7H481.5V225.1V226.6V228.0H477.5V226.6H477.0V225.1H476.0V223.7H475.5V222.2H475.0V220.8H475.5V219.3H476.0V217.9H476.5V216.4H477.0ZM490.5 219.0H495.5V220.6H496.5V222.2H496.0V223.8V225.4V227.0H491.0V225.4H490.5V223.8V222.2H490.0V220.6H490.5ZM504.0 217.0H509.0V218.4V219.8V221.2V222.6H508.5V224.0H504.0V222.6H503.5V221.2V219.8V218.4H504.0ZM512.5 219.0H519.0V220.5H520.0V222.0V223.5V225.0V226.5H519.5V228.0H513.0V226.5H512.5V225.0H511.5V223.5H511.0V222.0H511.5V220.5H512.5ZM525.5 216.0H531.0V217.4V218.9V220.3H531.5V221.7V223.1H531.0V224.6H530.0V226.0H524.5V224.6V223.1V221.7V220.3H524.0V218.9H524.5V217.4H525.5ZM535.5 218.0H540.5V219.4H541.0V220.8H541.5V222.2H541.0V223.6V225.0H536.0V223.6H534.5V222.2V220.8V219.4H535.5ZM549.0 224.0H555.0V225.4H555.5V226.8V228.2V229.6H555.0V231.0H549.5V229.6H549.0V228.2V226.8V225.4ZM563.0 229.0H568.5V230.4H569.5V231.8V233.2H569.0V234.6H568.5V236.0H563.0V234.6H562.5V233.2H563.0V231.8H562.5V230.4H563.0ZM575.5 232.0H582.0V233.4H582.5V234.8V236.2H582.0V237.6H581.0V239.0H575.5V237.6H574.5V236.2V234.8V233.4H575.5ZM640.5 243.0H647.0V244.6H648.0V246.2H648.5V247.8V249.4H647.5V251.0H641.0V249.4V247.8H640.0V246.2V244.6H640.5ZM655.5 252.0H661.5V253.4V254.8V256.2H661.0V257.6V259.0H655.5V257.6H654.0V256.2V254.8V253.4H655.5ZM676.5 262.0H682.5V263.5H683.0V265.0V266.5V268.0V269.5V271.0H677.5V269.5H676.5V268.0H676.0V266.5H675.5V265.0V263.5H676.5ZM690.5 268.0H696.0V269.5V271.0V272.5V274.0H696.5V275.5H696.0V277.0H691.0V275.5V274.0H690.5V272.5V271.0H690.0V269.5H690.5ZM333.5 255.0H340.0V256.4H341.0V257.9H341.5V259.3H341.0V260.7H340.5V262.1H340.0V263.6V265.0H334.0V263.6H333.5V262.1H332.5V260.7H332.0V259.3H332.5V257.9H333.0V256.4H333.5Z" fill="none" stroke="#ff1018" stroke-width="1" shape-rendering="crispEdges" opacity="0.8"/><path d="M38.5 432.5H42.5V435H41V436.5H43V439H38.5Z" fill="none" stroke="#ff1018" stroke-width="0.7"/><text x="87.6" y="377.9" font-size="10.9" fill="#d42830" stroke="#d42830" stroke-width="0.25">Group 1</text><text x="343.4" y="257.2" font-size="10.9" fill="#d42830" stroke="#d42830" stroke-width="0.25">Group 2</text><text x="595.2" y="240.4" font-size="10.9" fill="#d42830" stroke="#d42830" stroke-width="0.25">Group 3</text></g><rect x="0.00" y="55.00" width="10.20" height="461.00" fill="#f3f3f3"/><line x1="0.50" y1="55.00" x2="0.50" y2="526.00" stroke="#8a8a8a" stroke-width="1.0"/><line x1="0.00" y1="55.40" x2="10.20" y2="55.40" stroke="#9a9a9a" stroke-width="0.8"/><line x1="1.20" y1="515.70" x2="10.20" y2="515.70" stroke="#5a5a5a" stroke-width="0.7"/><text transform="translate(5.6,514.5) rotate(-90)" font-size="5" fill="#333" textLength="7" lengthAdjust="spacingAndGlyphs">0.0</text><line x1="7.20" y1="511.86" x2="10.20" y2="511.86" stroke="#484848" stroke-width="0.8"/><line x1="7.20" y1="508.02" x2="10.20" y2="508.02" stroke="#484848" stroke-width="0.8"/><line x1="7.20" y1="504.18" x2="10.20" y2="504.18" stroke="#484848" stroke-width="0.8"/><line x1="7.20" y1="500.34" x2="10.20" y2="500.34" stroke="#484848" stroke-width="0.8"/><line x1="7.20" y1="496.50" x2="10.20" y2="496.50" stroke="#484848" stroke-width="0.8"/><line x1="7.20" y1="492.66" x2="10.20" y2="492.66" stroke="#484848" stroke-width="0.8"/><line x1="7.20" y1="488.82" x2="10.20" y2="488.82" stroke="#484848" stroke-width="0.8"/><line x1="7.20" y1="484.98" x2="10.20" y2="484.98" stroke="#484848" stroke-width="0.8"/><line x1="7.20" y1="481.14" x2="10.20" y2="481.14" stroke="#484848" stroke-width="0.8"/><line x1="1.20" y1="477.30" x2="10.20" y2="477.30" stroke="#5a5a5a" stroke-width="0.7"/><text transform="translate(5.6,476.1) rotate(-90)" font-size="5" fill="#333" textLength="7" lengthAdjust="spacingAndGlyphs">0.5</text><line x1="7.20" y1="473.46" x2="10.20" y2="473.46" stroke="#484848" stroke-width="0.8"/><line x1="7.20" y1="469.62" x2="10.20" y2="469.62" stroke="#484848" stroke-width="0.8"/><line x1="7.20" y1="465.78" x2="10.20" y2="465.78" stroke="#484848" stroke-width="0.8"/><line x1="7.20" y1="461.94" x2="10.20" y2="461.94" stroke="#484848" stroke-width="0.8"/><line x1="7.20" y1="458.10" x2="10.20" y2="458.10" stroke="#484848" stroke-width="0.8"/><line x1="7.20" y1="454.26" x2="10.20" y2="454.26" stroke="#484848" stroke-width="0.8"/><line x1="7.20" y1="450.42" x2="10.20" y2="450.42" stroke="#484848" stroke-width="0.8"/><line x1="7.20" y1="446.58" x2="10.20" y2="446.58" stroke="#484848" stroke-width="0.8"/><line x1="7.20" y1="442.74" x2="10.20" y2="442.74" stroke="#484848" stroke-width="0.8"/><line x1="1.20" y1="438.90" x2="10.20" y2="438.90" stroke="#5a5a5a" stroke-width="0.7"/><text transform="translate(5.6,437.7) rotate(-90)" font-size="5" fill="#333" textLength="7" lengthAdjust="spacingAndGlyphs">1.0</text><line x1="7.20" y1="435.06" x2="10.20" y2="435.06" stroke="#484848" stroke-width="0.8"/><line x1="7.20" y1="431.22" x2="10.20" y2="431.22" stroke="#484848" stroke-width="0.8"/><line x1="7.20" y1="427.38" x2="10.20" y2="427.38" stroke="#484848" stroke-width="0.8"/><line x1="7.20" y1="423.54" x2="10.20" y2="423.54" stroke="#484848" stroke-width="0.8"/><line x1="7.20" y1="419.70" x2="10.20" y2="419.70" stroke="#484848" stroke-width="0.8"/><line x1="7.20" y1="415.86" x2="10.20" y2="415.86" stroke="#484848" stroke-width="0.8"/><line x1="7.20" y1="412.02" x2="10.20" y2="412.02" stroke="#484848" stroke-width="0.8"/><line x1="7.20" y1="408.18" x2="10.20" y2="408.18" stroke="#484848" stroke-width="0.8"/><line x1="7.20" y1="404.34" x2="10.20" y2="404.34" stroke="#484848" stroke-width="0.8"/><line x1="1.20" y1="400.50" x2="10.20" y2="400.50" stroke="#5a5a5a" stroke-width="0.7"/><text transform="translate(5.6,399.3) rotate(-90)" font-size="5" fill="#333" textLength="7" lengthAdjust="spacingAndGlyphs">1.5</text><line x1="7.20" y1="396.66" x2="10.20" y2="396.66" stroke="#484848" stroke-width="0.8"/><line x1="7.20" y1="392.82" x2="10.20" y2="392.82" stroke="#484848" stroke-width="0.8"/><line x1="7.20" y1="388.98" x2="10.20" y2="388.98" stroke="#484848" stroke-width="0.8"/><line x1="7.20" y1="385.14" x2="10.20" y2="385.14" stroke="#484848" stroke-width="0.8"/><line x1="7.20" y1="381.30" x2="10.20" y2="381.30" stroke="#484848" stroke-width="0.8"/><line x1="7.20" y1="377.46" x2="10.20" y2="377.46" stroke="#484848" stroke-width="0.8"/><line x1="7.20" y1="373.62" x2="10.20" y2="373.62" stroke="#484848" stroke-width="0.8"/><line x1="7.20" y1="369.78" x2="10.20" y2="369.78" stroke="#484848" stroke-width="0.8"/><line x1="7.20" y1="365.94" x2="10.20" y2="365.94" stroke="#484848" stroke-width="0.8"/><line x1="1.20" y1="362.10" x2="10.20" y2="362.10" stroke="#5a5a5a" stroke-width="0.7"/><text transform="translate(5.6,360.9) rotate(-90)" font-size="5" fill="#333" textLength="7" lengthAdjust="spacingAndGlyphs">2.0</text><line x1="7.20" y1="358.26" x2="10.20" y2="358.26" stroke="#484848" stroke-width="0.8"/><line x1="7.20" y1="354.42" x2="10.20" y2="354.42" stroke="#484848" stroke-width="0.8"/><line x1="7.20" y1="350.58" x2="10.20" y2="350.58" stroke="#484848" stroke-width="0.8"/><line x1="7.20" y1="346.74" x2="10.20" y2="346.74" stroke="#484848" stroke-width="0.8"/><line x1="7.20" y1="342.90" x2="10.20" y2="342.90" stroke="#484848" stroke-width="0.8"/><line x1="7.20" y1="339.06" x2="10.20" y2="339.06" stroke="#484848" stroke-width="0.8"/><line x1="7.20" y1="335.22" x2="10.20" y2="335.22" stroke="#484848" stroke-width="0.8"/><line x1="7.20" y1="331.38" x2="10.20" y2="331.38" stroke="#484848" stroke-width="0.8"/><line x1="7.20" y1="327.54" x2="10.20" y2="327.54" stroke="#484848" stroke-width="0.8"/><line x1="1.20" y1="323.70" x2="10.20" y2="323.70" stroke="#5a5a5a" stroke-width="0.7"/><text transform="translate(5.6,322.5) rotate(-90)" font-size="5" fill="#333" textLength="7" lengthAdjust="spacingAndGlyphs">2.5</text><line x1="7.20" y1="319.86" x2="10.20" y2="319.86" stroke="#484848" stroke-width="0.8"/><line x1="7.20" y1="316.02" x2="10.20" y2="316.02" stroke="#484848" stroke-width="0.8"/><line x1="7.20" y1="312.18" x2="10.20" y2="312.18" stroke="#484848" stroke-width="0.8"/><line x1="7.20" y1="308.34" x2="10.20" y2="308.34" stroke="#484848" stroke-width="0.8"/><line x1="7.20" y1="304.50" x2="10.20" y2="304.50" stroke="#484848" stroke-width="0.8"/><line x1="7.20" y1="300.66" x2="10.20" y2="300.66" stroke="#484848" stroke-width="0.8"/><line x1="7.20" y1="296.82" x2="10.20" y2="296.82" stroke="#484848" stroke-width="0.8"/><line x1="7.20" y1="292.98" x2="10.20" y2="292.98" stroke="#484848" stroke-width="0.8"/><line x1="7.20" y1="289.14" x2="10.20" y2="289.14" stroke="#484848" stroke-width="0.8"/><line x1="1.20" y1="285.30" x2="10.20" y2="285.30" stroke="#5a5a5a" stroke-width="0.7"/><text transform="translate(5.6,284.1) rotate(-90)" font-size="5" fill="#333" textLength="7" lengthAdjust="spacingAndGlyphs">3.0</text><line x1="7.20" y1="281.46" x2="10.20" y2="281.46" stroke="#484848" stroke-width="0.8"/><line x1="7.20" y1="277.62" x2="10.20" y2="277.62" stroke="#484848" stroke-width="0.8"/><line x1="7.20" y1="273.78" x2="10.20" y2="273.78" stroke="#484848" stroke-width="0.8"/><line x1="7.20" y1="269.94" x2="10.20" y2="269.94" stroke="#484848" stroke-width="0.8"/><line x1="7.20" y1="266.10" x2="10.20" y2="266.10" stroke="#484848" stroke-width="0.8"/><line x1="7.20" y1="262.26" x2="10.20" y2="262.26" stroke="#484848" stroke-width="0.8"/><line x1="7.20" y1="258.42" x2="10.20" y2="258.42" stroke="#484848" stroke-width="0.8"/><line x1="7.20" y1="254.58" x2="10.20" y2="254.58" stroke="#484848" stroke-width="0.8"/><line x1="7.20" y1="250.74" x2="10.20" y2="250.74" stroke="#484848" stroke-width="0.8"/><line x1="1.20" y1="246.90" x2="10.20" y2="246.90" stroke="#5a5a5a" stroke-width="0.7"/><text transform="translate(5.6,245.7) rotate(-90)" font-size="5" fill="#333" textLength="7" lengthAdjust="spacingAndGlyphs">3.5</text><line x1="7.20" y1="243.06" x2="10.20" y2="243.06" stroke="#484848" stroke-width="0.8"/><line x1="7.20" y1="239.22" x2="10.20" y2="239.22" stroke="#484848" stroke-width="0.8"/><line x1="7.20" y1="235.38" x2="10.20" y2="235.38" stroke="#484848" stroke-width="0.8"/><line x1="7.20" y1="231.54" x2="10.20" y2="231.54" stroke="#484848" stroke-width="0.8"/><line x1="7.20" y1="227.70" x2="10.20" y2="227.70" stroke="#484848" stroke-width="0.8"/><line x1="7.20" y1="223.86" x2="10.20" y2="223.86" stroke="#484848" stroke-width="0.8"/><line x1="7.20" y1="220.02" x2="10.20" y2="220.02" stroke="#484848" stroke-width="0.8"/><line x1="7.20" y1="216.18" x2="10.20" y2="216.18" stroke="#484848" stroke-width="0.8"/><line x1="7.20" y1="212.34" x2="10.20" y2="212.34" stroke="#484848" stroke-width="0.8"/><line x1="1.20" y1="208.50" x2="10.20" y2="208.50" stroke="#5a5a5a" stroke-width="0.7"/><text transform="translate(5.6,207.3) rotate(-90)" font-size="5" fill="#333" textLength="7" lengthAdjust="spacingAndGlyphs">4.0</text><line x1="7.20" y1="204.66" x2="10.20" y2="204.66" stroke="#484848" stroke-width="0.8"/><line x1="7.20" y1="200.82" x2="10.20" y2="200.82" stroke="#484848" stroke-width="0.8"/><line x1="7.20" y1="196.98" x2="10.20" y2="196.98" stroke="#484848" stroke-width="0.8"/><line x1="7.20" y1="193.14" x2="10.20" y2="193.14" stroke="#484848" stroke-width="0.8"/><line x1="7.20" y1="189.30" x2="10.20" y2="189.30" stroke="#484848" stroke-width="0.8"/><line x1="7.20" y1="185.46" x2="10.20" y2="185.46" stroke="#484848" stroke-width="0.8"/><line x1="7.20" y1="181.62" x2="10.20" y2="181.62" stroke="#484848" stroke-width="0.8"/><line x1="7.20" y1="177.78" x2="10.20" y2="177.78" stroke="#484848" stroke-width="0.8"/><line x1="7.20" y1="173.94" x2="10.20" y2="173.94" stroke="#484848" stroke-width="0.8"/><line x1="1.20" y1="170.10" x2="10.20" y2="170.10" stroke="#5a5a5a" stroke-width="0.7"/><text transform="translate(5.6,168.9) rotate(-90)" font-size="5" fill="#333" textLength="7" lengthAdjust="spacingAndGlyphs">4.5</text><line x1="7.20" y1="166.26" x2="10.20" y2="166.26" stroke="#484848" stroke-width="0.8"/><line x1="7.20" y1="162.42" x2="10.20" y2="162.42" stroke="#484848" stroke-width="0.8"/><line x1="7.20" y1="158.58" x2="10.20" y2="158.58" stroke="#484848" stroke-width="0.8"/><line x1="7.20" y1="154.74" x2="10.20" y2="154.74" stroke="#484848" stroke-width="0.8"/><line x1="7.20" y1="150.90" x2="10.20" y2="150.90" stroke="#484848" stroke-width="0.8"/><line x1="7.20" y1="147.06" x2="10.20" y2="147.06" stroke="#484848" stroke-width="0.8"/><line x1="7.20" y1="143.22" x2="10.20" y2="143.22" stroke="#484848" stroke-width="0.8"/><line x1="7.20" y1="139.38" x2="10.20" y2="139.38" stroke="#484848" stroke-width="0.8"/><line x1="7.20" y1="135.54" x2="10.20" y2="135.54" stroke="#484848" stroke-width="0.8"/><line x1="1.20" y1="131.70" x2="10.20" y2="131.70" stroke="#5a5a5a" stroke-width="0.7"/><text transform="translate(5.6,130.5) rotate(-90)" font-size="5" fill="#333" textLength="7" lengthAdjust="spacingAndGlyphs">5.0</text><line x1="7.20" y1="127.86" x2="10.20" y2="127.86" stroke="#484848" stroke-width="0.8"/><line x1="7.20" y1="124.02" x2="10.20" y2="124.02" stroke="#484848" stroke-width="0.8"/><line x1="7.20" y1="120.18" x2="10.20" y2="120.18" stroke="#484848" stroke-width="0.8"/><line x1="7.20" y1="116.34" x2="10.20" y2="116.34" stroke="#484848" stroke-width="0.8"/><line x1="7.20" y1="112.50" x2="10.20" y2="112.50" stroke="#484848" stroke-width="0.8"/><line x1="7.20" y1="108.66" x2="10.20" y2="108.66" stroke="#484848" stroke-width="0.8"/><line x1="7.20" y1="104.82" x2="10.20" y2="104.82" stroke="#484848" stroke-width="0.8"/><line x1="7.20" y1="100.98" x2="10.20" y2="100.98" stroke="#484848" stroke-width="0.8"/><line x1="7.20" y1="97.14" x2="10.20" y2="97.14" stroke="#484848" stroke-width="0.8"/><line x1="1.20" y1="93.30" x2="10.20" y2="93.30" stroke="#5a5a5a" stroke-width="0.7"/><text transform="translate(5.6,92.1) rotate(-90)" font-size="5" fill="#333" textLength="7" lengthAdjust="spacingAndGlyphs">5.5</text><line x1="7.20" y1="89.46" x2="10.20" y2="89.46" stroke="#484848" stroke-width="0.8"/><line x1="7.20" y1="85.62" x2="10.20" y2="85.62" stroke="#484848" stroke-width="0.8"/><line x1="7.20" y1="81.78" x2="10.20" y2="81.78" stroke="#484848" stroke-width="0.8"/><line x1="7.20" y1="77.94" x2="10.20" y2="77.94" stroke="#484848" stroke-width="0.8"/><line x1="7.20" y1="74.10" x2="10.20" y2="74.10" stroke="#484848" stroke-width="0.8"/><line x1="7.20" y1="70.26" x2="10.20" y2="70.26" stroke="#484848" stroke-width="0.8"/><line x1="7.20" y1="66.42" x2="10.20" y2="66.42" stroke="#484848" stroke-width="0.8"/><line x1="7.20" y1="62.58" x2="10.20" y2="62.58" stroke="#484848" stroke-width="0.8"/><line x1="7.20" y1="58.74" x2="10.20" y2="58.74" stroke="#484848" stroke-width="0.8"/><rect x="0.00" y="515.30" width="700.00" height="10.70" fill="#f0f0f0"/><line x1="15.88" y1="515.50" x2="15.88" y2="519.00" stroke="#484848" stroke-width="0.8"/><line x1="22.15" y1="515.50" x2="22.15" y2="519.00" stroke="#484848" stroke-width="0.8"/><line x1="28.43" y1="515.50" x2="28.43" y2="519.00" stroke="#484848" stroke-width="0.8"/><line x1="34.71" y1="515.50" x2="34.71" y2="519.00" stroke="#484848" stroke-width="0.8"/><line x1="40.98" y1="515.50" x2="40.98" y2="519.00" stroke="#484848" stroke-width="0.8"/><line x1="47.26" y1="515.50" x2="47.26" y2="519.00" stroke="#484848" stroke-width="0.8"/><line x1="53.54" y1="515.50" x2="53.54" y2="519.00" stroke="#484848" stroke-width="0.8"/><line x1="59.81" y1="515.50" x2="59.81" y2="519.00" stroke="#484848" stroke-width="0.8"/><line x1="66.09" y1="515.50" x2="66.09" y2="519.00" stroke="#484848" stroke-width="0.8"/><line x1="72.36" y1="515.50" x2="72.36" y2="525.20" stroke="#505050" stroke-width="0.8"/><text x="73.6" y="524.2" font-size="5.4" fill="#333" text-anchor="start">5.0</text><line x1="78.64" y1="515.50" x2="78.64" y2="519.00" stroke="#484848" stroke-width="0.8"/><line x1="84.92" y1="515.50" x2="84.92" y2="519.00" stroke="#484848" stroke-width="0.8"/><line x1="91.19" y1="515.50" x2="91.19" y2="519.00" stroke="#484848" stroke-width="0.8"/><line x1="97.47" y1="515.50" x2="97.47" y2="519.00" stroke="#484848" stroke-width="0.8"/><line x1="103.75" y1="515.50" x2="103.75" y2="519.00" stroke="#484848" stroke-width="0.8"/><line x1="110.02" y1="515.50" x2="110.02" y2="519.00" stroke="#484848" stroke-width="0.8"/><line x1="116.30" y1="515.50" x2="116.30" y2="519.00" stroke="#484848" stroke-width="0.8"/><line x1="122.58" y1="515.50" x2="122.58" y2="519.00" stroke="#484848" stroke-width="0.8"/><line x1="128.85" y1="515.50" x2="128.85" y2="519.00" stroke="#484848" stroke-width="0.8"/><line x1="135.13" y1="515.50" x2="135.13" y2="525.20" stroke="#505050" stroke-width="0.8"/><text x="136.3" y="524.2" font-size="5.4" fill="#333" text-anchor="start">10.0</text><line x1="141.41" y1="515.50" x2="141.41" y2="519.00" stroke="#484848" stroke-width="0.8"/><line x1="147.68" y1="515.50" x2="147.68" y2="519.00" stroke="#484848" stroke-width="0.8"/><line x1="153.96" y1="515.50" x2="153.96" y2="519.00" stroke="#484848" stroke-width="0.8"/><line x1="160.24" y1="515.50" x2="160.24" y2="519.00" stroke="#484848" stroke-width="0.8"/><line x1="166.51" y1="515.50" x2="166.51" y2="519.00" stroke="#484848" stroke-width="0.8"/><line x1="172.79" y1="515.50" x2="172.79" y2="519.00" stroke="#484848" stroke-width="0.8"/><line x1="179.07" y1="515.50" x2="179.07" y2="519.00" stroke="#484848" stroke-width="0.8"/><line x1="185.34" y1="515.50" x2="185.34" y2="519.00" stroke="#484848" stroke-width="0.8"/><line x1="191.62" y1="515.50" x2="191.62" y2="519.00" stroke="#484848" stroke-width="0.8"/><line x1="197.90" y1="515.50" x2="197.90" y2="525.20" stroke="#505050" stroke-width="0.8"/><text x="199.1" y="524.2" font-size="5.4" fill="#333" text-anchor="start">15.0</text><line x1="204.17" y1="515.50" x2="204.17" y2="519.00" stroke="#484848" stroke-width="0.8"/><line x1="210.45" y1="515.50" x2="210.45" y2="519.00" stroke="#484848" stroke-width="0.8"/><line x1="216.72" y1="515.50" x2="216.72" y2="519.00" stroke="#484848" stroke-width="0.8"/><line x1="223.00" y1="515.50" x2="223.00" y2="519.00" stroke="#484848" stroke-width="0.8"/><line x1="229.28" y1="515.50" x2="229.28" y2="519.00" stroke="#484848" stroke-width="0.8"/><line x1="235.55" y1="515.50" x2="235.55" y2="519.00" stroke="#484848" stroke-width="0.8"/><line x1="241.83" y1="515.50" x2="241.83" y2="519.00" stroke="#484848" stroke-width="0.8"/><line x1="248.11" y1="515.50" x2="248.11" y2="519.00" stroke="#484848" stroke-width="0.8"/><line x1="254.38" y1="515.50" x2="254.38" y2="519.00" stroke="#484848" stroke-width="0.8"/><line x1="260.66" y1="515.50" x2="260.66" y2="525.20" stroke="#505050" stroke-width="0.8"/><text x="261.9" y="524.2" font-size="5.4" fill="#333" text-anchor="start">20.0</text><line x1="266.94" y1="515.50" x2="266.94" y2="519.00" stroke="#484848" stroke-width="0.8"/><line x1="273.21" y1="515.50" x2="273.21" y2="519.00" stroke="#484848" stroke-width="0.8"/><line x1="279.49" y1="515.50" x2="279.49" y2="519.00" stroke="#484848" stroke-width="0.8"/><line x1="285.77" y1="515.50" x2="285.77" y2="519.00" stroke="#484848" stroke-width="0.8"/><line x1="292.04" y1="515.50" x2="292.04" y2="519.00" stroke="#484848" stroke-width="0.8"/><line x1="298.32" y1="515.50" x2="298.32" y2="519.00" stroke="#484848" stroke-width="0.8"/><line x1="304.60" y1="515.50" x2="304.60" y2="519.00" stroke="#484848" stroke-width="0.8"/><line x1="310.87" y1="515.50" x2="310.87" y2="519.00" stroke="#484848" stroke-width="0.8"/><line x1="317.15" y1="515.50" x2="317.15" y2="519.00" stroke="#484848" stroke-width="0.8"/><line x1="323.43" y1="515.50" x2="323.43" y2="525.20" stroke="#505050" stroke-width="0.8"/><text x="324.6" y="524.2" font-size="5.4" fill="#333" text-anchor="start">25.0</text><line x1="329.70" y1="515.50" x2="329.70" y2="519.00" stroke="#484848" stroke-width="0.8"/><line x1="335.98" y1="515.50" x2="335.98" y2="519.00" stroke="#484848" stroke-width="0.8"/><line x1="342.25" y1="515.50" x2="342.25" y2="519.00" stroke="#484848" stroke-width="0.8"/><line x1="348.53" y1="515.50" x2="348.53" y2="519.00" stroke="#484848" stroke-width="0.8"/><line x1="354.81" y1="515.50" x2="354.81" y2="519.00" stroke="#484848" stroke-width="0.8"/><line x1="361.08" y1="515.50" x2="361.08" y2="519.00" stroke="#484848" stroke-width="0.8"/><line x1="367.36" y1="515.50" x2="367.36" y2="519.00" stroke="#484848" stroke-width="0.8"/><line x1="373.64" y1="515.50" x2="373.64" y2="519.00" stroke="#484848" stroke-width="0.8"/><line x1="379.91" y1="515.50" x2="379.91" y2="519.00" stroke="#484848" stroke-width="0.8"/><line x1="386.19" y1="515.50" x2="386.19" y2="525.20" stroke="#505050" stroke-width="0.8"/><text x="387.4" y="524.2" font-size="5.4" fill="#333" text-anchor="start">30.0</text><line x1="392.47" y1="515.50" x2="392.47" y2="519.00" stroke="#484848" stroke-width="0.8"/><line x1="398.74" y1="515.50" x2="398.74" y2="519.00" stroke="#484848" stroke-width="0.8"/><line x1="405.02" y1="515.50" x2="405.02" y2="519.00" stroke="#484848" stroke-width="0.8"/><line x1="411.30" y1="515.50" x2="411.30" y2="519.00" stroke="#484848" stroke-width="0.8"/><line x1="417.57" y1="515.50" x2="417.57" y2="519.00" stroke="#484848" stroke-width="0.8"/><line x1="423.85" y1="515.50" x2="423.85" y2="519.00" stroke="#484848" stroke-width="0.8"/><line x1="430.13" y1="515.50" x2="430.13" y2="519.00" stroke="#484848" stroke-width="0.8"/><line x1="436.40" y1="515.50" x2="436.40" y2="519.00" stroke="#484848" stroke-width="0.8"/><line x1="442.68" y1="515.50" x2="442.68" y2="519.00" stroke="#484848" stroke-width="0.8"/><line x1="448.96" y1="515.50" x2="448.96" y2="525.20" stroke="#505050" stroke-width="0.8"/><text x="450.2" y="524.2" font-size="5.4" fill="#333" text-anchor="start">35.0</text><line x1="455.23" y1="515.50" x2="455.23" y2="519.00" stroke="#484848" stroke-width="0.8"/><line x1="461.51" y1="515.50" x2="461.51" y2="519.00" stroke="#484848" stroke-width="0.8"/><line x1="467.78" y1="515.50" x2="467.78" y2="519.00" stroke="#484848" stroke-width="0.8"/><line x1="474.06" y1="515.50" x2="474.06" y2="519.00" stroke="#484848" stroke-width="0.8"/><line x1="480.34" y1="515.50" x2="480.34" y2="519.00" stroke="#484848" stroke-width="0.8"/><line x1="486.61" y1="515.50" x2="486.61" y2="519.00" stroke="#484848" stroke-width="0.8"/><line x1="492.89" y1="515.50" x2="492.89" y2="519.00" stroke="#484848" stroke-width="0.8"/><line x1="499.17" y1="515.50" x2="499.17" y2="519.00" stroke="#484848" stroke-width="0.8"/><line x1="505.44" y1="515.50" x2="505.44" y2="519.00" stroke="#484848" stroke-width="0.8"/><line x1="511.72" y1="515.50" x2="511.72" y2="525.20" stroke="#505050" stroke-width="0.8"/><text x="512.9" y="524.2" font-size="5.4" fill="#333" text-anchor="start">40.0</text><line x1="518.00" y1="515.50" x2="518.00" y2="519.00" stroke="#484848" stroke-width="0.8"/><line x1="524.27" y1="515.50" x2="524.27" y2="519.00" stroke="#484848" stroke-width="0.8"/><line x1="530.55" y1="515.50" x2="530.55" y2="519.00" stroke="#484848" stroke-width="0.8"/><line x1="536.83" y1="515.50" x2="536.83" y2="519.00" stroke="#484848" stroke-width="0.8"/><line x1="543.10" y1="515.50" x2="543.10" y2="519.00" stroke="#484848" stroke-width="0.8"/><line x1="549.38" y1="515.50" x2="549.38" y2="519.00" stroke="#484848" stroke-width="0.8"/><line x1="555.66" y1="515.50" x2="555.66" y2="519.00" stroke="#484848" stroke-width="0.8"/><line x1="561.93" y1="515.50" x2="561.93" y2="519.00" stroke="#484848" stroke-width="0.8"/><line x1="568.21" y1="515.50" x2="568.21" y2="519.00" stroke="#484848" stroke-width="0.8"/><line x1="574.49" y1="515.50" x2="574.49" y2="525.20" stroke="#505050" stroke-width="0.8"/><text x="575.7" y="524.2" font-size="5.4" fill="#333" text-anchor="start">45.0</text><line x1="580.76" y1="515.50" x2="580.76" y2="519.00" stroke="#484848" stroke-width="0.8"/><line x1="587.04" y1="515.50" x2="587.04" y2="519.00" stroke="#484848" stroke-width="0.8"/><line x1="593.31" y1="515.50" x2="593.31" y2="519.00" stroke="#484848" stroke-width="0.8"/><line x1="599.59" y1="515.50" x2="599.59" y2="519.00" stroke="#484848" stroke-width="0.8"/><line x1="605.87" y1="515.50" x2="605.87" y2="519.00" stroke="#484848" stroke-width="0.8"/><line x1="612.14" y1="515.50" x2="612.14" y2="519.00" stroke="#484848" stroke-width="0.8"/><line x1="618.42" y1="515.50" x2="618.42" y2="519.00" stroke="#484848" stroke-width="0.8"/><line x1="624.70" y1="515.50" x2="624.70" y2="519.00" stroke="#484848" stroke-width="0.8"/><line x1="630.97" y1="515.50" x2="630.97" y2="519.00" stroke="#484848" stroke-width="0.8"/><line x1="637.25" y1="515.50" x2="637.25" y2="525.20" stroke="#505050" stroke-width="0.8"/><text x="638.5" y="524.2" font-size="5.4" fill="#333" text-anchor="start">50.0</text><line x1="643.53" y1="515.50" x2="643.53" y2="519.00" stroke="#484848" stroke-width="0.8"/><line x1="649.80" y1="515.50" x2="649.80" y2="519.00" stroke="#484848" stroke-width="0.8"/><line x1="656.08" y1="515.50" x2="656.08" y2="519.00" stroke="#484848" stroke-width="0.8"/><line x1="662.36" y1="515.50" x2="662.36" y2="519.00" stroke="#484848" stroke-width="0.8"/><line x1="668.63" y1="515.50" x2="668.63" y2="519.00" stroke="#484848" stroke-width="0.8"/><line x1="674.91" y1="515.50" x2="674.91" y2="519.00" stroke="#484848" stroke-width="0.8"/><line x1="681.19" y1="515.50" x2="681.19" y2="519.00" stroke="#484848" stroke-width="0.8"/><line x1="687.46" y1="515.50" x2="687.46" y2="519.00" stroke="#484848" stroke-width="0.8"/><line x1="693.74" y1="515.50" x2="693.74" y2="519.00" stroke="#484848" stroke-width="0.8"/><line x1="0.50" y1="515.00" x2="0.50" y2="525.40" stroke="#8a8a8a" stroke-width="1.0"/><line x1="153.96" y1="517.20" x2="153.96" y2="524.60" stroke="#5a5a5a" stroke-width="0.7"/><line x1="0.00" y1="525.80" x2="700.00" y2="525.80" stroke="#d0d0d0" stroke-width="0.8"/><rect x="0.00" y="526.20" width="700.00" height="15.00" fill="#f0f0f0"/><rect x="3.4" y="529" width="69.6" height="8.8" fill="#f4f4f4" stroke="#b4b4b4" stroke-width="0.6"/><path d="M3.4 537.8V529H73" fill="none" stroke="#8c8c8c" stroke-width="0.7"/><text x="5.2" y="535.8" font-size="6.3" fill="#2a2a2a" text-anchor="start" textLength="65.5" lengthAdjust="spacingAndGlyphs">Position: (11.500,4.020)</text><rect x="78.2" y="529" width="41.8" height="8.8" fill="#f4f4f4" stroke="#b4b4b4" stroke-width="0.6"/><path d="M78.2 537.8V529H120" fill="none" stroke="#8c8c8c" stroke-width="0.7"/><text x="80.0" y="535.8" font-size="6.3" fill="#2a2a2a" text-anchor="start" textLength="37.5" lengthAdjust="spacingAndGlyphs">Value: 1.0531</text><rect x="589.2" y="529" width="32.59999999999991" height="8.8" fill="#f4f4f4" stroke="#b4b4b4" stroke-width="0.6"/><path d="M589.2 537.8V529H621.8" fill="none" stroke="#8c8c8c" stroke-width="0.7"/><text x="591.0" y="535.8" font-size="6.3" fill="#2a2a2a" text-anchor="start" textLength="29.0" lengthAdjust="spacingAndGlyphs">State: Blob</text><rect x="628" y="529" width="69.60000000000002" height="8.8" fill="#f4f4f4" stroke="#b4b4b4" stroke-width="0.6"/><path d="M628 537.8V529H697.6" fill="none" stroke="#8c8c8c" stroke-width="0.7"/><text x="629.8" y="535.8" font-size="6.3" fill="#2a2a2a" text-anchor="start" textLength="65.5" lengthAdjust="spacingAndGlyphs">Substate: Select Blob(s)</text><rect x="218.2" y="391.5" width="447.40000000000003" height="123.60000000000002" fill="#064860" opacity="0.32" filter="url(#dsh)"/><defs><filter id="dsh" x="-5%" y="-10%" width="110%" height="120%"><feGaussianBlur stdDeviation="2.6"/></filter></defs><rect x="220.2" y="392" width="442.40000000000003" height="119.60000000000002" fill="#ffffff" stroke="#3aa0d8" stroke-width="0.5"/><rect x="224.9" y="395.6" width="8" height="8.2" rx="1.3" fill="#5b8fe0"/><circle cx="228.9" cy="399.7" r="2.6" fill="#c8dcf8"/><text x="236.4" y="402.3" font-size="6.8" fill="#1a1a1a" text-anchor="start" textLength="40.0" lengthAdjust="spacingAndGlyphs">Blob Set Table</text><path d="M652.2 397.3L656.6 401.7M656.6 397.3L652.2 401.7" stroke="#333" stroke-width="0.6"/><rect x="220.50" y="408.40" width="441.80" height="13.60" fill="#f0f0f0"/><path d="M223.5 416.5L226 414L227 415L229 413L230.8 414.8L228.3 417.3L227.3 416.3L225.3 418.3Z" fill="#f0c440" stroke="#c89820" stroke-width="0.5"/><circle cx="239.6" cy="414.9" r="2.6" fill="#e0a040" stroke="#b07828" stroke-width="0.7" stroke-dasharray="1.1 0.7"/><circle cx="239.6" cy="414.9" r="1" fill="#f4e4c0"/><rect x="248.2" y="410.6" width="8" height="8.4" rx="0.6" fill="#8fb0e0"/><rect x="249.8" y="411.2" width="4.8" height="3.2" fill="#e4ecf8"/><rect x="250.2" y="416" width="4" height="2.8" fill="#d0dcf0"/><line x1="220.20" y1="422.00" x2="662.60" y2="422.00" stroke="#d0d0d0" stroke-width="0.5"/><text x="223.2" y="431.7" font-size="6.1" fill="#2a2a2a" text-anchor="start" textLength="5.6" lengthAdjust="spacingAndGlyphs">ID</text><text x="264.2" y="431.7" font-size="6.1" fill="#2a2a2a" text-anchor="start" textLength="15.0" lengthAdjust="spacingAndGlyphs">Name</text><text x="305.3" y="431.7" font-size="6.1" fill="#2a2a2a" text-anchor="start" textLength="12.7" lengthAdjust="spacingAndGlyphs">Type</text><text x="346.4" y="431.7" font-size="6.1" fill="#2a2a2a" text-anchor="start" textLength="27.5" lengthAdjust="spacingAndGlyphs"># of Blobs</text><text x="387.6" y="431.7" font-size="6.1" fill="#2a2a2a" text-anchor="start" textLength="51.0" lengthAdjust="spacingAndGlyphs"># of Included Blobs</text><text x="444.1" y="431.7" font-size="6.1" fill="#2a2a2a" text-anchor="start" textLength="38.0" lengthAdjust="spacingAndGlyphs">Volume (Total)</text><text x="488.0" y="431.7" font-size="6.1" fill="#2a2a2a" text-anchor="start" textLength="62.4" lengthAdjust="spacingAndGlyphs">Included Volume (Total)</text><text x="555.9" y="431.7" font-size="6.1" fill="#2a2a2a" text-anchor="start" textLength="67.5" lengthAdjust="spacingAndGlyphs">Percent Response (Total)</text><text x="629.2" y="431.7" font-size="6.1" fill="#2a2a2a" text-anchor="start" textLength="33.6" lengthAdjust="spacingAndGlyphs">Included Per</text><line x1="261.50" y1="422.50" x2="261.50" y2="435.90" stroke="#e0e0e0" stroke-width="0.5"/><line x1="302.60" y1="422.50" x2="302.60" y2="435.90" stroke="#e0e0e0" stroke-width="0.5"/><line x1="343.70" y1="422.50" x2="343.70" y2="435.90" stroke="#e0e0e0" stroke-width="0.5"/><line x1="384.80" y1="422.50" x2="384.80" y2="435.90" stroke="#e0e0e0" stroke-width="0.5"/><line x1="443.10" y1="422.50" x2="443.10" y2="435.90" stroke="#e0e0e0" stroke-width="0.5"/><line x1="485.60" y1="422.50" x2="485.60" y2="435.90" stroke="#e0e0e0" stroke-width="0.5"/><line x1="553.10" y1="422.50" x2="553.10" y2="435.90" stroke="#e0e0e0" stroke-width="0.5"/><line x1="626.80" y1="422.50" x2="626.80" y2="435.90" stroke="#e0e0e0" stroke-width="0.5"/><line x1="261.50" y1="435.90" x2="261.50" y2="475.30" stroke="#808080" stroke-width="0.6"/><line x1="302.60" y1="435.90" x2="302.60" y2="475.30" stroke="#808080" stroke-width="0.6"/><line x1="343.70" y1="435.90" x2="343.70" y2="475.30" stroke="#808080" stroke-width="0.6"/><line x1="384.80" y1="435.90" x2="384.80" y2="475.30" stroke="#808080" stroke-width="0.6"/><line x1="443.10" y1="435.90" x2="443.10" y2="475.30" stroke="#808080" stroke-width="0.6"/><line x1="485.60" y1="435.90" x2="485.60" y2="475.30" stroke="#808080" stroke-width="0.6"/><line x1="553.10" y1="435.90" x2="553.10" y2="475.30" stroke="#808080" stroke-width="0.6"/><line x1="626.80" y1="435.90" x2="626.80" y2="475.30" stroke="#808080" stroke-width="0.6"/><line x1="220.20" y1="435.90" x2="662.60" y2="435.90" stroke="#8c8c8c" stroke-width="0.6"/><line x1="220.20" y1="445.40" x2="662.60" y2="445.40" stroke="#8c8c8c" stroke-width="0.6"/><line x1="220.20" y1="455.40" x2="662.60" y2="455.40" stroke="#8c8c8c" stroke-width="0.6"/><line x1="220.20" y1="465.30" x2="662.60" y2="465.30" stroke="#8c8c8c" stroke-width="0.6"/><line x1="220.20" y1="475.30" x2="662.60" y2="475.30" stroke="#8c8c8c" stroke-width="0.6"/><text x="260.5" y="443.1" font-size="6.1" fill="#222" text-anchor="end" textLength="3.0" lengthAdjust="spacingAndGlyphs">1</text><text x="303.6" y="443.1" font-size="6.1" fill="#222" text-anchor="start" textLength="20.5" lengthAdjust="spacingAndGlyphs">Graphic</text><text x="383.8" y="443.1" font-size="6.1" fill="#222" text-anchor="end" textLength="9.1" lengthAdjust="spacingAndGlyphs">262</text><text x="442.1" y="443.1" font-size="6.1" fill="#222" text-anchor="end" textLength="3.0" lengthAdjust="spacingAndGlyphs">0</text><text x="484.6" y="443.1" font-size="6.1" fill="#222" text-anchor="end" textLength="30.5" lengthAdjust="spacingAndGlyphs">1328555.44</text><text x="552.1" y="443.1" font-size="6.1" fill="#222" text-anchor="end" textLength="12.2" lengthAdjust="spacingAndGlyphs">0.00</text><text x="625.8" y="443.1" font-size="6.1" fill="#222" text-anchor="end" textLength="15.2" lengthAdjust="spacingAndGlyphs">69.08</text><text x="260.5" y="452.6" font-size="6.1" fill="#222" text-anchor="end" textLength="3.0" lengthAdjust="spacingAndGlyphs">2</text><text x="303.6" y="452.6" font-size="6.1" fill="#222" text-anchor="start" textLength="20.5" lengthAdjust="spacingAndGlyphs">Graphic</text><text x="383.8" y="452.6" font-size="6.1" fill="#222" text-anchor="end" textLength="9.1" lengthAdjust="spacingAndGlyphs">199</text><text x="442.1" y="452.6" font-size="6.1" fill="#222" text-anchor="end" textLength="3.0" lengthAdjust="spacingAndGlyphs">0</text><text x="484.6" y="452.6" font-size="6.1" fill="#222" text-anchor="end" textLength="27.4" lengthAdjust="spacingAndGlyphs">553821.36</text><text x="552.1" y="452.6" font-size="6.1" fill="#222" text-anchor="end" textLength="12.2" lengthAdjust="spacingAndGlyphs">0.00</text><text x="625.8" y="452.6" font-size="6.1" fill="#222" text-anchor="end" textLength="15.2" lengthAdjust="spacingAndGlyphs">28.80</text><text x="260.5" y="462.6" font-size="6.1" fill="#222" text-anchor="end" textLength="3.0" lengthAdjust="spacingAndGlyphs">3</text><text x="303.6" y="462.6" font-size="6.1" fill="#222" text-anchor="start" textLength="20.5" lengthAdjust="spacingAndGlyphs">Graphic</text><text x="383.8" y="462.6" font-size="6.1" fill="#222" text-anchor="end" textLength="3.0" lengthAdjust="spacingAndGlyphs">2</text><text x="442.1" y="462.6" font-size="6.1" fill="#222" text-anchor="end" textLength="3.0" lengthAdjust="spacingAndGlyphs">0</text><text x="484.6" y="462.6" font-size="6.1" fill="#222" text-anchor="end" textLength="21.3" lengthAdjust="spacingAndGlyphs">1802.13</text><text x="552.1" y="462.6" font-size="6.1" fill="#222" text-anchor="end" textLength="12.2" lengthAdjust="spacingAndGlyphs">0.00</text><text x="625.8" y="462.6" font-size="6.1" fill="#222" text-anchor="end" textLength="12.2" lengthAdjust="spacingAndGlyphs">0.09</text><text x="262.5" y="472.5" font-size="6.1" fill="#222" text-anchor="start" textLength="21.6" lengthAdjust="spacingAndGlyphs">Residual</text><text x="303.6" y="472.5" font-size="6.1" fill="#222" text-anchor="start" textLength="40.1" lengthAdjust="spacingAndGlyphs">Residual Group</text><text x="383.8" y="472.5" font-size="6.1" fill="#222" text-anchor="end" textLength="6.1" lengthAdjust="spacingAndGlyphs">33</text><text x="442.1" y="472.5" font-size="6.1" fill="#222" text-anchor="end" textLength="3.0" lengthAdjust="spacingAndGlyphs">0</text><text x="484.6" y="472.5" font-size="6.1" fill="#222" text-anchor="end" textLength="24.4" lengthAdjust="spacingAndGlyphs">39001.89</text><text x="552.1" y="472.5" font-size="6.1" fill="#222" text-anchor="end" textLength="12.2" lengthAdjust="spacingAndGlyphs">0.00</text><text x="625.8" y="472.5" font-size="6.1" fill="#222" text-anchor="end" textLength="12.2" lengthAdjust="spacingAndGlyphs">2.03</text><rect x="220.50" y="503.20" width="441.80" height="8.10" fill="#f0f0f0"/><rect x="231.50" y="504.00" width="254.10" height="6.60" fill="#cdcdcd"/><path d="M226.2 505.3L224.4 507.1L226.2 508.9" fill="none" stroke="#404040" stroke-width="0.8"/><path d="M656.4 505.3L658.2 507.1L656.4 508.9" fill="none" stroke="#404040" stroke-width="0.8"/></svg></div>
<div id="top"><svg width="700" height="55" viewBox="0 0 700 55" style="position:absolute;left:0;top:0;"><rect x="0.00" y="0.00" width="700.00" height="25.00" fill="#ffffff"/><rect x="1.4" y="3.8" width="8" height="8" rx="1.3" fill="#5b8fe0"/><circle cx="5.4" cy="7.8" r="2.6" fill="#c8dcf8"/><text y="10.4" font-size="6.7" fill="#9a9a9a"><tspan x="12.9" textLength="27.6" lengthAdjust="spacingAndGlyphs">GC Image</tspan><tspan x="42.6" textLength="2.4" lengthAdjust="spacingAndGlyphs">-</tspan><tspan x="47.5" textLength="220.8" lengthAdjust="spacingAndGlyphs">C:\Users\admin\Documents\B-004-4-13857-75%IPA.D~NCD2B.ch_img01.gci</tspan></text><line x1="635.00" y1="7.60" x2="640.00" y2="7.60" stroke="#8a8a8a" stroke-width="0.6"/><rect x="659.6" y="5.8" width="4" height="4" fill="none" stroke="#8a8a8a" stroke-width="0.6"/><path d="M660.6 5.8V4.9H664.6V8.9H663.6" fill="none" stroke="#8a8a8a" stroke-width="0.6"/><path d="M685 5.3L690 10.3M690 5.3L685 10.3" stroke="#7a7a7a" stroke-width="0.6"/><text x="2.6" y="22.1" font-size="6.8" fill="#363636" text-anchor="start" textLength="9.4" lengthAdjust="spacingAndGlyphs">File</text><text x="17.1" y="22.1" font-size="6.8" fill="#363636" text-anchor="start" textLength="10.3" lengthAdjust="spacingAndGlyphs">Edit</text><text x="32.9" y="22.1" font-size="6.8" fill="#363636" text-anchor="start" textLength="13.6" lengthAdjust="spacingAndGlyphs">View</text><text x="51.1" y="22.1" font-size="6.8" fill="#363636" text-anchor="start" textLength="30.9" lengthAdjust="spacingAndGlyphs">Processing</text><text x="87.4" y="22.1" font-size="6.8" fill="#363636" text-anchor="start" textLength="25.2" lengthAdjust="spacingAndGlyphs">Template</text><text x="118.5" y="22.1" font-size="6.8" fill="#363636" text-anchor="start" textLength="40.5" lengthAdjust="spacingAndGlyphs">Quantification</text><text x="164.5" y="22.1" font-size="6.8" fill="#363636" text-anchor="start" textLength="23.0" lengthAdjust="spacingAndGlyphs">Method</text><text x="192.5" y="22.1" font-size="6.8" fill="#363636" text-anchor="start" textLength="28.0" lengthAdjust="spacingAndGlyphs">Configure</text><text x="226.0" y="22.1" font-size="6.8" fill="#363636" text-anchor="start" textLength="14.5" lengthAdjust="spacingAndGlyphs">Tools</text><text x="245.5" y="22.1" font-size="6.8" fill="#363636" text-anchor="start" textLength="20.5" lengthAdjust="spacingAndGlyphs">Review</text><text x="271.0" y="22.1" font-size="6.8" fill="#363636" text-anchor="start" textLength="26.0" lengthAdjust="spacingAndGlyphs">Windows</text><text x="302.0" y="22.1" font-size="6.8" fill="#363636" text-anchor="start" textLength="13.5" lengthAdjust="spacingAndGlyphs">Help</text><rect x="0.00" y="25.00" width="700.00" height="30.00" fill="#f0f0f0"/><line x1="0.00" y1="25.20" x2="700.00" y2="25.20" stroke="#c4c4c4" stroke-width="0.6"/><line x1="63.60" y1="28.50" x2="63.60" y2="37.50" stroke="#b8b8b8" stroke-width="0.6"/><line x1="76.90" y1="28.50" x2="76.90" y2="37.50" stroke="#b8b8b8" stroke-width="0.6"/><line x1="163.90" y1="28.50" x2="163.90" y2="37.50" stroke="#b8b8b8" stroke-width="0.6"/><line x1="190.50" y1="28.50" x2="190.50" y2="37.50" stroke="#b8b8b8" stroke-width="0.6"/><line x1="297.60" y1="28.50" x2="297.60" y2="37.50" stroke="#b8b8b8" stroke-width="0.6"/><line x1="138.40" y1="42.50" x2="138.40" y2="51.50" stroke="#b8b8b8" stroke-width="0.6"/><line x1="235.90" y1="42.50" x2="235.90" y2="51.50" stroke="#b8b8b8" stroke-width="0.6"/><line x1="311.50" y1="42.50" x2="311.50" y2="51.50" stroke="#b8b8b8" stroke-width="0.6"/><rect x="1.6" y="32.6" width="8.6" height="4.8" rx="0.8" fill="#3f7fd0"/><rect x="2.8" y="32.4" width="6.2" height="2.6" fill="#e4eefa"/><path d="M3 29.6L5.8 32.4M5.9 30.4V32.5H3.8" fill="none" stroke="#2f6fc4" stroke-width="0.9"/><path d="M15 31H18.2L19 32H22.5V37H15Z" fill="#f2ba48"/><path d="M15 37L16.6 33.3H23.4L22.5 37Z" fill="#f8d070"/><path d="M19.3 30.8C20.3 29.2 22 29.2 23 30.4M23.2 29V30.6H21.6" fill="none" stroke="#3868c0" stroke-width="0.8"/><path d="M28.5 32H31.5L32.3 33H36V37.3H28.5Z" fill="#f4ba48"/><path d="M31.6 31.4C32.2 29.6 34.2 29.3 35.4 30.6M35.6 29.2V30.8H34" fill="none" stroke="#3868c0" stroke-width="0.8"/><rect x="40" y="29.3" width="8" height="8" rx="0.6" fill="#9bb6e0"/><rect x="41.6" y="29.8" width="4.8" height="3.2" fill="#e4ecf8"/><rect x="42" y="34.4" width="4" height="2.9" fill="#d0dcf0"/><rect x="52.2" y="32" width="8" height="4.6" rx="1" fill="#8fb0e4"/><rect x="54" y="29.6" width="4.4" height="3.4" fill="#e8f0fc" stroke="#7a9cd8" stroke-width="0.5"/><rect x="54" y="34.6" width="4.4" height="2.2" fill="#dce8f8"/><path d="M65.8 32.5L69.5 29.8L70 31.2C72.5 30.6 74.3 31.4 74.3 33.2C74 35.3 71.5 36.8 69.6 37.2L68.6 35.2L65.8 32.5Z" fill="#f8d868" stroke="#d8a020" stroke-width="0.6"/><path d="M81 32.3H87.7M84.8 30L83.6 35" stroke="#8c8c8c" stroke-width="0.8" fill="none"/><circle cx="86.3" cy="30.6" r="1.2" fill="none" stroke="#8c8c8c" stroke-width="0.7"/><circle cx="84.3" cy="36" r="1.2" fill="none" stroke="#8c8c8c" stroke-width="0.7"/><rect x="91.2" y="29.4" width="5.2" height="6.4" fill="#9a9a9a"/><rect x="93.4" y="30.8" width="5.2" height="6.4" fill="#8c8c8c"/><rect x="103.4" y="30.5" width="6.8" height="6.8" fill="#949494"/><rect x="105.2" y="29.2" width="3.2" height="2.2" fill="#8a8a8a"/><rect x="114.9" y="31" width="3.6" height="3.6" fill="#8c8c8c"/><rect x="120.2" y="29.4" width="3.4" height="3.2" fill="#8c8c8c"/><rect x="120.2" y="34" width="3.4" height="3.2" fill="#8c8c8c"/><path d="M118.5 32.8H119.4V31H120.2M119.4 32.8V35.6H120.2" stroke="#8c8c8c" stroke-width="0.6" fill="none"/><path d="M135.6 29.6L131 36" stroke="#8c8c8c" stroke-width="1.8"/><rect x="127.9" y="29.4" width="3.2" height="3.2" fill="#8c8c8c"/><path d="M128.5 37L130.5 34.5" stroke="#8c8c8c" stroke-width="1.2"/><path d="M141.6 30.2L148 36.6M148 30.2L141.6 36.6" stroke="#858585" stroke-width="1.7"/><path d="M154.10000000000002 29.8L156.5 32.2M156.5 29.8L154.10000000000002 32.2" stroke="#e4788c" stroke-width="0.7"/><path d="M154.10000000000002 34.099999999999994L156.5 36.5M156.5 34.099999999999994L154.10000000000002 36.5" stroke="#e4788c" stroke-width="0.7"/><path d="M158.10000000000002 29.8L160.5 32.2M160.5 29.8L158.10000000000002 32.2" stroke="#e4788c" stroke-width="0.7"/><path d="M158.10000000000002 34.099999999999994L160.5 36.5M160.5 34.099999999999994L158.10000000000002 36.5" stroke="#e4788c" stroke-width="0.7"/><circle cx="168.4" cy="30.9" r="1.7" fill="none" stroke="#3a68c8" stroke-width="0.9"/><path d="M174.2 30L168 36.4" stroke="#f0c030" stroke-width="2.4" stroke-linecap="round"/><path d="M167 33.5L171 36.8" stroke="#d8a020" stroke-width="0.7"/><rect x="180" y="29.2" width="7.2" height="8.2" rx="0.6" fill="#3c8a94"/><rect x="181" y="30.1" width="5.2" height="1.8" fill="#b8e0e0"/><rect x="181.0" y="33.0" width="1.3" height="1.3" fill="#7acc78"/><rect x="181.0" y="35.0" width="1.3" height="1.3" fill="#7acc78"/><rect x="182.9" y="33.0" width="1.3" height="1.3" fill="#7acc78"/><rect x="182.9" y="35.0" width="1.3" height="1.3" fill="#7acc78"/><rect x="184.8" y="33.0" width="1.3" height="1.3" fill="#7acc78"/><rect x="184.8" y="35.0" width="1.3" height="1.3" fill="#7acc78"/><defs><linearGradient id="rb" x1="0" x2="1" y1="0" y2="0"><stop offset="0" stop-color="#e83020"/><stop offset="0.3" stop-color="#f0d030"/><stop offset="0.55" stop-color="#40c060"/><stop offset="0.8" stop-color="#3090e0"/><stop offset="1" stop-color="#4040c0"/></linearGradient></defs><rect x="193.2" y="29.2" width="8" height="8.2" fill="url(#rb)" stroke="#303030" stroke-width="0.7"/><rect x="204.2" y="26.7" width="42" height="12.4" fill="#ffffff" stroke="#c0c0c0" stroke-width="0.5"/><text x="206.0" y="35.4" font-size="6.6" fill="#222" text-anchor="start" textLength="8.3" lengthAdjust="spacingAndGlyphs">1.4</text><path d="M238.6 32L240.8 34.2L243 32" fill="none" stroke="#555" stroke-width="0.6"/><rect x="249.7" y="30.2" width="6.5" height="5.6" fill="#e23636"/><path d="M261 33.2L264.6 29.8V31.7H268.7V34.7H264.6V36.6Z" fill="#fdeca0" stroke="#e0a018" stroke-width="0.7"/><path d="M281.6 33.2L278 29.8V31.7H273.9V34.7H278V36.6Z" fill="#fdeca0" stroke="#e0a018" stroke-width="0.7"/><rect x="286.3" y="29.3" width="6" height="4.8" fill="#dfe8f4" stroke="#5a78a8" stroke-width="0.6" stroke-dasharray="1 0.6"/><circle cx="291" cy="33.6" r="1.9" fill="#eef4fc" stroke="#7088a8" stroke-width="0.6"/><path d="M292.4 35.2L294.3 37.3" stroke="#606878" stroke-width="0.9"/><path d="M300.6 29.3V37.2H308.5" fill="none" stroke="#606060" stroke-width="0.7"/><path d="M301 36.5L304.6 31L308 34.6" fill="none" stroke="#d04848" stroke-width="0.6"/><path d="M301 36.8L305.6 30.2L308.4 32.6" fill="none" stroke="#5070c8" stroke-width="0.6"/><rect x="312.4" y="29.4" width="8" height="7" fill="#f4f6fa" stroke="#8090a8" stroke-width="0.5"/><rect x="312.4" y="29.4" width="8" height="1.8" fill="#28406c"/><path d="M312.4 33.0H320.4M312.4 34.699999999999996H320.4M315.09999999999997 31.2V36.4M317.79999999999995 31.2V36.4" stroke="#a8b4c8" stroke-width="0.4"/><path d="M325.4 36.8L329 32.2L333.2 36.8Z" fill="#2f7fe0"/><rect x="326" y="29.4" width="5.6" height="3.2" fill="#9cc4f0"/><path d="M326.3 30.2H331M326.3 31.4H331" stroke="#2860b0" stroke-width="0.5"/><rect x="338.2" y="30.2" width="8" height="7" fill="#f4f6fa" stroke="#8090a8" stroke-width="0.5"/><rect x="338.2" y="30.2" width="8" height="1.8" fill="#9098a8"/><path d="M338.2 33.8H346.2M338.2 35.5H346.2M340.9 32.0V37.2M343.59999999999997 32.0V37.2" stroke="#a8b4c8" stroke-width="0.4"/><circle cx="339.6" cy="31" r="1.9" fill="#e8f0fc" stroke="#3868d0" stroke-width="0.8"/><rect x="351" y="30.2" width="8" height="7" fill="#f4f6fa" stroke="#8090a8" stroke-width="0.5"/><rect x="351" y="30.2" width="8" height="1.8" fill="#9098a8"/><path d="M351 33.8H359M351 35.5H359M353.7 32.0V37.2M356.4 32.0V37.2" stroke="#a8b4c8" stroke-width="0.4"/><path d="M350.6 32C351.5 29.3 354.5 29 355.6 30.4M353 31.4H355.8" stroke="#3868d0" stroke-width="0.9" fill="none"/><rect x="363.5" y="30.2" width="8" height="7" fill="#f4f6fa" stroke="#8090a8" stroke-width="0.5"/><rect x="363.5" y="30.2" width="8" height="1.8" fill="#9098a8"/><path d="M363.5 33.8H371.5M363.5 35.5H371.5M366.2 32.0V37.2M368.9 32.0V37.2" stroke="#a8b4c8" stroke-width="0.4"/><path d="M363 32C364 29.3 367 29 368 30.4M365.5 31.4H368.2" stroke="#d83030" stroke-width="0.9" fill="none"/><path d="M375.6 29.6L378.2 30.6V36.2L375.6 37.2Z" fill="#2f6fc8"/><path d="M383.4 29.6L380.8 30.6V36.2L383.4 37.2Z" fill="#2f6fc8"/><path d="M378.6 30C380 32 380 35 378.6 37" stroke="#6898e0" stroke-width="0.8" fill="none"/><circle cx="5" cy="45.8" r="2.7" fill="#f8f8f8" stroke="#9a9a9a" stroke-width="0.7"/><path d="M7 48L9.8 50.8" stroke="#9a9a9a" stroke-width="1"/><text x="15.4" y="50.4" font-size="9.8" style="font-family:Liberation Serif,serif" fill="#202020">T</text><circle cx="28.9" cy="48.3" r="2.2" fill="none" stroke="#707070" stroke-width="0.6"/><circle cx="33.6" cy="48.3" r="2.2" fill="none" stroke="#707070" stroke-width="0.6"/><path d="M28 46L29.6 43.4M34.4 46L32.8 43.4M30.2 44.6H32.2" stroke="#707070" stroke-width="0.7" fill="none"/><path d="M40.6 49.8L41.2 44.6L47.4 44L46.4 49.4Z" fill="none" stroke="#303030" stroke-width="0.6" stroke-dasharray="1.2 0.7"/><rect x="39.800000000000004" y="49.0" width="1.6" height="1.6" fill="#202020"/><rect x="40.400000000000006" y="43.800000000000004" width="1.6" height="1.6" fill="#202020"/><rect x="46.6" y="43.2" width="1.6" height="1.6" fill="#202020"/><rect x="45.6" y="48.6" width="1.6" height="1.6" fill="#202020"/><path d="M43.6 46.4L46 48.4" stroke="#202020" stroke-width="0.7"/><text x="50.0" y="49.5" font-size="6.5" fill="#303030" text-anchor="start" textLength="20.0" lengthAdjust="spacingAndGlyphs">Graphic</text><path d="M73.9 46.5H76.5L75.2 48.0Z" fill="#505050"/><rect x="78.3" y="41.2" width="25.2" height="11.4" fill="#cce4f8" stroke="#98c8f0" stroke-width="0.5"/><circle cx="84.2" cy="46.4" r="2.7" fill="#5a90e0" stroke="#2858b8" stroke-width="0.6"/><path d="M82.4 45.4H86M82.4 46.8H86" stroke="#c8dcf8" stroke-width="0.5"/><path d="M85.2 47.4L87.6 50.4L86.2 50.2L85.6 51.2Z" fill="#202020"/><text x="90.4" y="49.5" font-size="6.5" fill="#303050" text-anchor="start" textLength="10.9" lengthAdjust="spacingAndGlyphs">Blob</text><path d="M105.7 46.5H108.3L107 48.0Z" fill="#505050"/><path d="M112.2 50H118.4" stroke="#404040" stroke-width="0.7"/><path d="M113.3 50V44M115.2 50V46.4M117 50V43.6" stroke="#d03030" stroke-width="0.7"/><text x="122.6" y="49.5" font-size="6.5" fill="#303030" text-anchor="start" textLength="7.0" lengthAdjust="spacingAndGlyphs">MS</text><path d="M134.1 46.5H136.70000000000002L135.4 48.0Z" fill="#505050"/><path d="M141.4 44.2H146.2L143.2 46.6H147.6" fill="none" stroke="#d82828" stroke-width="1"/><circle cx="147.4" cy="48.6" r="2.2" fill="#e8f0fc" stroke="#3868c8" stroke-width="0.7"/><text x="152.6" y="49.5" font-size="6.5" fill="#303030" text-anchor="start" textLength="22.4" lengthAdjust="spacingAndGlyphs">Template</text><path d="M180.39999999999998 46.5H183.0L181.7 48.0Z" fill="#505050"/><path d="M188.2 45H192L190 47.2H193.6M191.4 47.2V50.6H189.6" fill="none" stroke="#8c8c8c" stroke-width="0.8"/><rect x="199" y="43.6" width="3.4" height="2.6" fill="#8c8c8c"/><path d="M203 45H207M203.4 47.6H207M205.2 47.6V50.6H203.6" fill="none" stroke="#8c8c8c" stroke-width="0.8"/><circle cx="216.2" cy="45.2" r="1.7" fill="#8c8c8c"/><path d="M214.8 46H217.6V48.4H214.8Z" fill="#8c8c8c"/><rect x="212.4" y="48" width="7.6" height="2.8" fill="#8c8c8c"/><path d="M225.4 44H228.8L230 46H232" fill="none" stroke="#8c8c8c" stroke-width="0.8"/><rect x="224.6" y="48.2" width="7.6" height="2.4" fill="#8c8c8c"/><ellipse cx="242.2" cy="47" rx="3" ry="3.8" fill="#2a8848"/><path d="M240.8 45H243.6M240.8 47H243.6M240.8 49H243.6" stroke="#b8e8c0" stroke-width="0.6"/><path d="M250.4 50L252.6 44.2L254.4 44.8L252.6 50.4Z" fill="#8c8c8c"/><path d="M254.8 50L257 44L258.8 44.6L256.8 50.4Z" fill="#8c8c8c"/><path d="M263.2 43.8L270.8 46.4M267 45.2V50M264.4 50.4H270.2M270.8 46.4L269.6 48" fill="none" stroke="#808080" stroke-width="0.9"/><circle cx="279.2" cy="47" r="2.9" fill="#c8ecd0" stroke="#50a868" stroke-width="0.7"/><circle cx="279.2" cy="47" r="1.1" fill="#3c9858"/><path d="M288.0 46.5H290.6L289.3 48.0Z" fill="#505050"/><path d="M294.6 44H298.6V47.4H302V50.4H294.6Z" fill="#9a9a9a"/><path d="M307.0 46.5H309.6L308.3 48.0Z" fill="#9a9a9a"/><rect x="316" y="43.8" width="6" height="7" rx="0.5" fill="#f4f6fa" stroke="#7a88a0" stroke-width="0.6"/><rect x="317.6" y="43" width="2.8" height="1.6" fill="#8a96ac"/><path d="M315.4 47.6L317.4 49.8L321 45.8" fill="none" stroke="#2868d0" stroke-width="1"/><text x="325.0" y="49.5" font-size="6.5" fill="#303030" text-anchor="start" textLength="18.0" lengthAdjust="spacingAndGlyphs">Review</text><path d="M347.09999999999997 46.5H349.7L348.4 48.0Z" fill="#505050"/><line x1="0.00" y1="54.60" x2="700.00" y2="54.60" stroke="#2a9ab0" stroke-width="0.8"/></svg></div>
</body></html>
